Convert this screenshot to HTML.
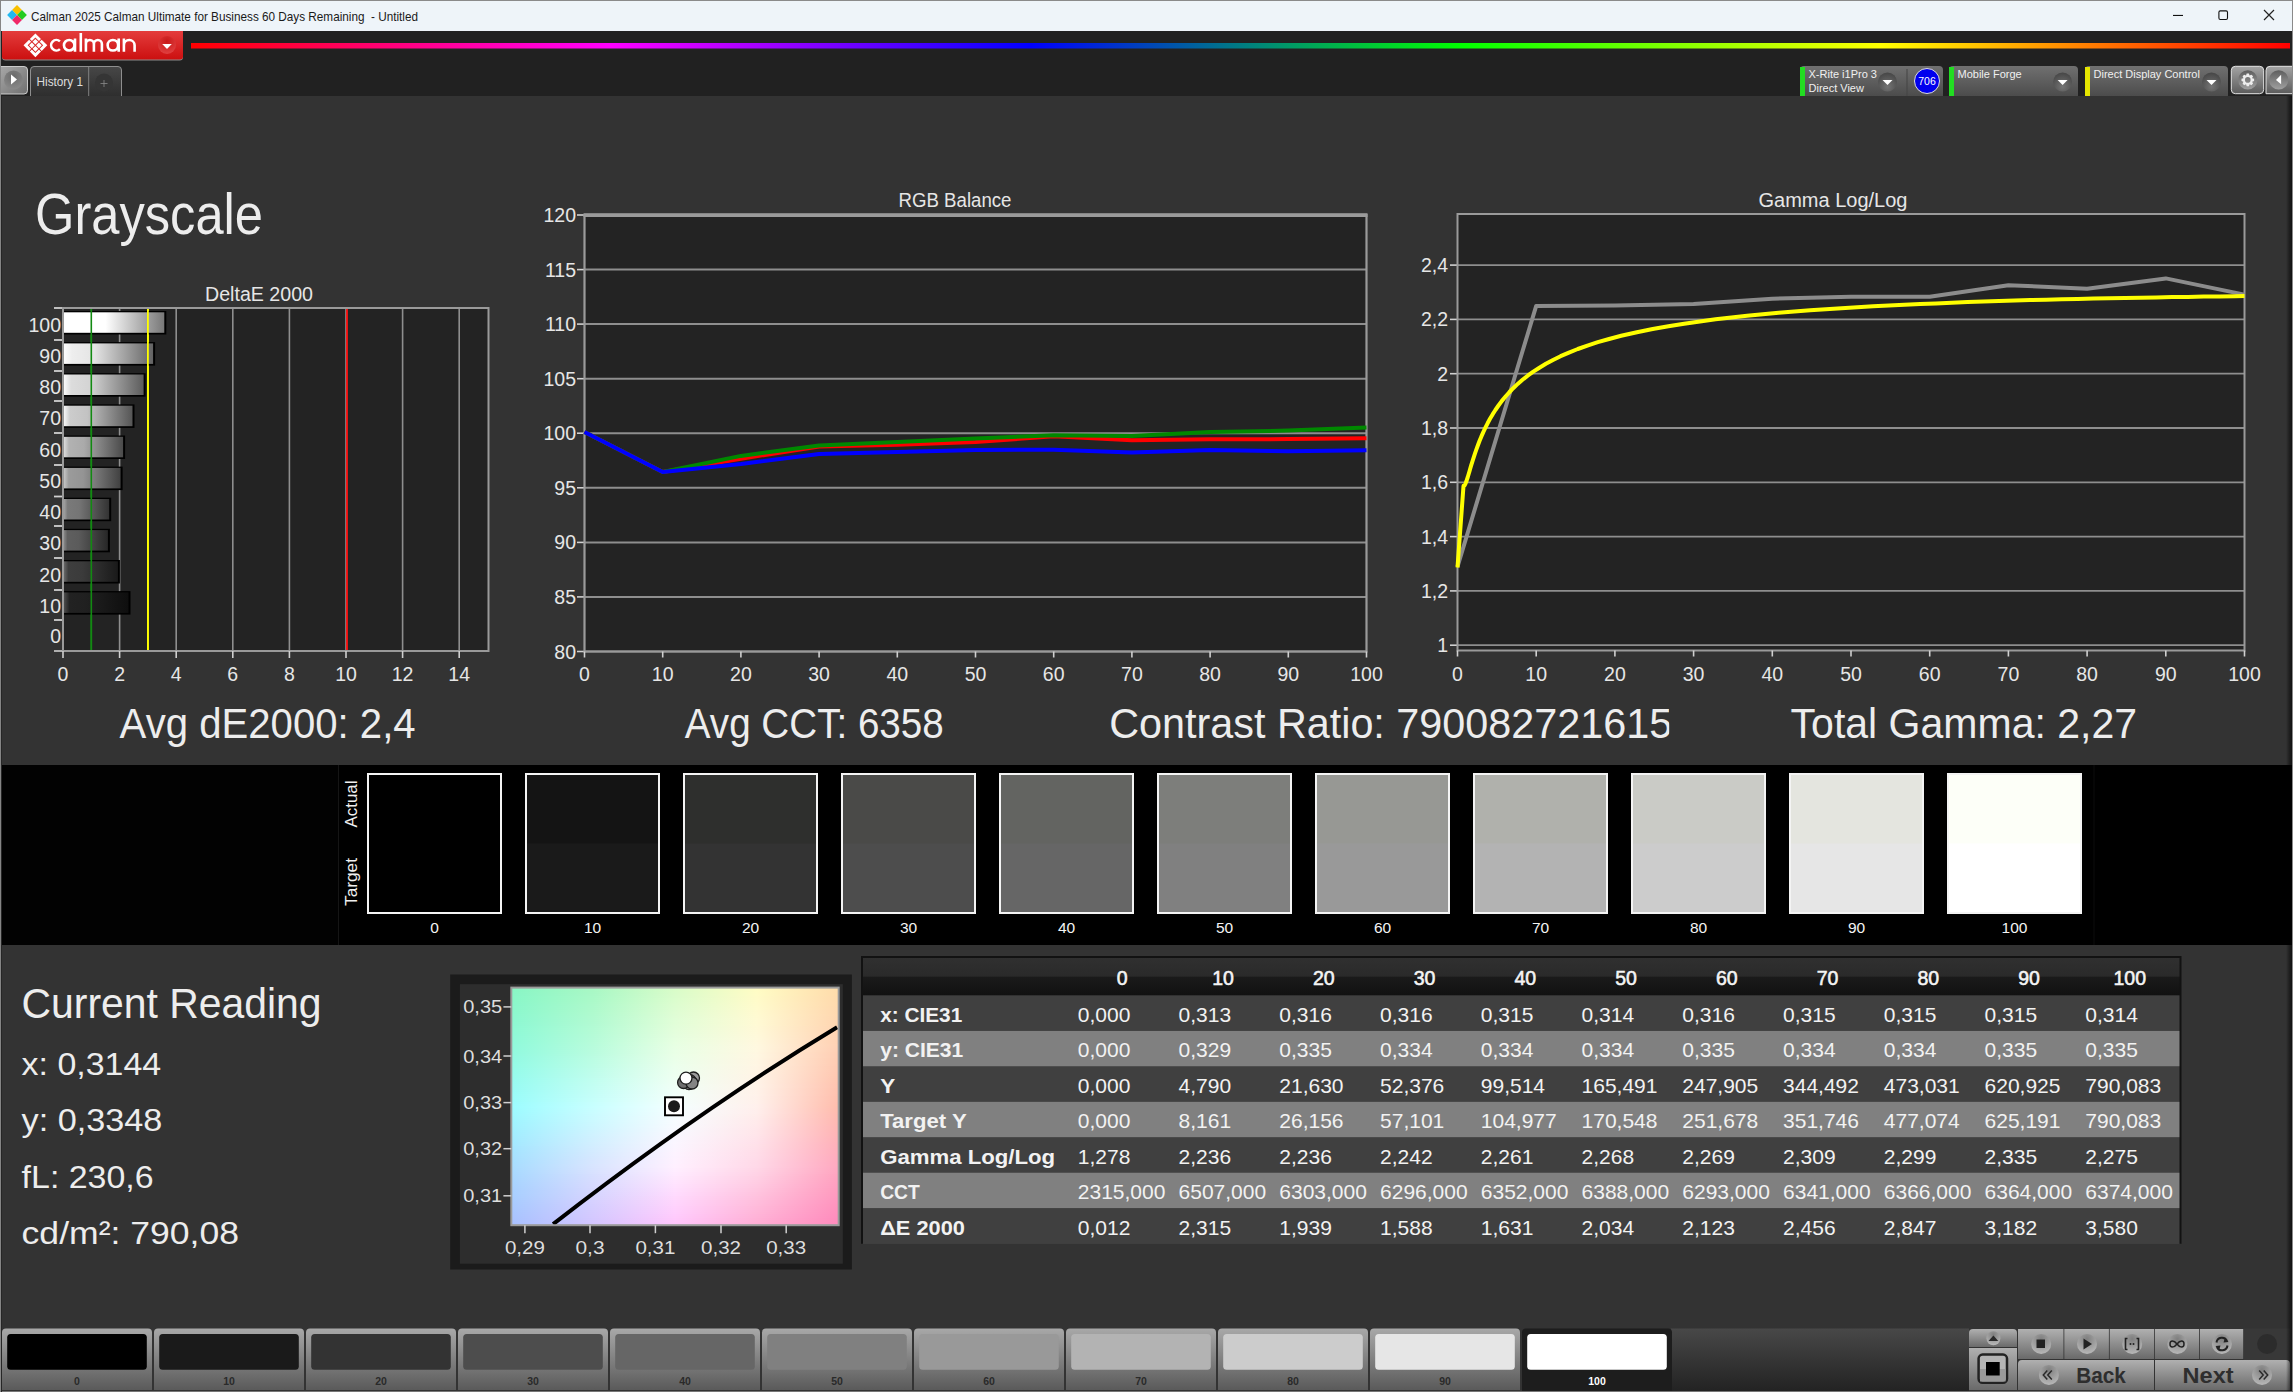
<!DOCTYPE html><html><head><meta charset="utf-8"><style>html,body{margin:0;padding:0;background:#333;overflow:hidden}svg{display:block}text{font-family:"Liberation Sans",sans-serif}</style></head><body>
<svg width="2293" height="1392" viewBox="0 0 2293 1392">
<defs>
<linearGradient id="rainbow" gradientUnits="userSpaceOnUse" x1="191" y1="0" x2="2290" y2="0"><stop offset="0" stop-color="#ff0000"/><stop offset="0.2" stop-color="#ff00ff"/><stop offset="0.4" stop-color="#0000ff"/><stop offset="0.605" stop-color="#00ff00"/><stop offset="0.805" stop-color="#ffff00"/><stop offset="1" stop-color="#ff0000"/></linearGradient>
<linearGradient id="redbox" x1="0" y1="0" x2="0" y2="1"><stop offset="0" stop-color="#e43c3c"/><stop offset="1" stop-color="#cc1010"/></linearGradient>
<radialGradient id="reddrop" cx="0.5" cy="0.3" r="0.7"><stop offset="0" stop-color="#c81818"/><stop offset="1" stop-color="#e04040"/></radialGradient>
<linearGradient id="tabg" x1="0" y1="0" x2="0" y2="1"><stop offset="0" stop-color="#474747"/><stop offset="1" stop-color="#2e2e2e"/></linearGradient>
<radialGradient id="dropc" cx="0.5" cy="0.75" r="0.75"><stop offset="0" stop-color="#7a7a7a"/><stop offset="1" stop-color="#404040"/></radialGradient>
<linearGradient id="widg" x1="0" y1="0" x2="0" y2="1"><stop offset="0" stop-color="#707070"/><stop offset="1" stop-color="#4c4c4c"/></linearGradient>
<linearGradient id="btng" x1="0" y1="0" x2="0" y2="1"><stop offset="0" stop-color="#a8a8a8"/><stop offset="1" stop-color="#5a5a5a"/></linearGradient>
<linearGradient id="hdrg" x1="0" y1="0" x2="0" y2="1"><stop offset="0" stop-color="#303030"/><stop offset="0.5" stop-color="#2a2a2a"/><stop offset="0.52" stop-color="#1a1a1a"/><stop offset="1" stop-color="#111"/></linearGradient>
</defs>
<rect x="0" y="0" width="2293" height="1392" fill="#333333"/>
<rect x="0" y="0" width="2293" height="31" fill="#eef4f9"/>
<rect x="0" y="31" width="2293" height="65" fill="#212121"/>
<rect x="0.5" y="0.5" width="2292" height="1391" fill="none" stroke="#8a8a8a" stroke-width="1"/>
<g transform="translate(17,15) rotate(45)"><rect x="-7" y="-7" width="7" height="7" fill="#f8c000"/><rect x="0" y="-7" width="7" height="7" fill="#22cc22"/><rect x="-7" y="0" width="7" height="7" fill="#22b8f0"/><rect x="0" y="0" width="7" height="7" fill="#f02868"/></g>
<text x="31" y="20.5" font-size="13.5" fill="#1a1a1a" text-anchor="start" font-weight="normal" textLength="387" lengthAdjust="spacingAndGlyphs" style="white-space:pre">Calman 2025 Calman Ultimate for Business 60 Days Remaining  - Untitled</text>
<rect x="2173" y="14.9" width="10" height="1.1" fill="#111"/>
<rect x="2218.9" y="10.9" width="8.6" height="8.6" rx="1.4" fill="none" stroke="#111" stroke-width="1.1"/>
<path d="M2264 10 L2274 20 M2274 10 L2264 20" stroke="#222" stroke-width="1.2"/>
<path d="M2 31 H183 V57 Q183 60.5 179.5 60.5 H5.5 Q2 60.5 2 57 Z" fill="#8c8c8c"/>
<path d="M2 31 H183 V56.5 Q183 59.5 180 59.5 H5 Q2 59.5 2 56.5 Z" fill="url(#redbox)"/>
<g transform="translate(35.4,45.3) rotate(45)" fill="#fff"><path d="M-8.40 -8.40 L-0.50 -8.40 L-0.50 -5.50 L-5.50 -5.50 L-5.50 -0.50 L-8.40 -0.50 Z"/><path d="M-8.40 8.40 L-0.50 8.40 L-0.50 5.50 L-5.50 5.50 L-5.50 0.50 L-8.40 0.50 Z"/><path d="M8.40 -8.40 L0.50 -8.40 L0.50 -5.50 L5.50 -5.50 L5.50 -0.50 L8.40 -0.50 Z"/><path d="M8.40 8.40 L0.50 8.40 L0.50 5.50 L5.50 5.50 L5.50 0.50 L8.40 0.50 Z"/><rect x="-4.5" y="-4.5" width="4.0" height="4.0"/><rect x="-4.5" y="0.5" width="4.0" height="4.0"/><rect x="0.5" y="-4.5" width="4.0" height="4.0"/><rect x="0.5" y="0.5" width="4.0" height="4.0"/></g>
<path d="M59.92 41.35 A5.25 5.25 0 1 0 59.92 49.15 M74.45 45.25 A5.25 5.25 0 1 1 63.95 45.25 A5.25 5.25 0 1 1 74.45 45.25 M75.0 38.6 V51.8 M80.8 33.0 V51.8 M85.9 38.6 V51.8 M85.9 44 A4 4 0 0 1 93.9 44 V51.8 M93.9 44 A4 4 0 0 1 101.9 44 V51.8 M118.15 45.25 A5.25 5.25 0 1 1 107.65 45.25 A5.25 5.25 0 1 1 118.15 45.25 M118.7 38.6 V51.8 M123.9 38.6 V51.8 M123.9 45.35 A5.35 5.35 0 0 1 134.6 45.35 V51.8" fill="none" stroke="#fff" stroke-width="2.6"/>
<circle cx="167" cy="45" r="9" fill="url(#reddrop)"/>
<path d="M162.2 44 H171.8 L167 49 Z" fill="#fff"/>
<rect x="191" y="43" width="2099" height="5.5" fill="url(#rainbow)"/>
<linearGradient id="playg" x1="0" y1="0" x2="1" y2="1"><stop offset="0" stop-color="#a8a8a8"/><stop offset="1" stop-color="#707070"/></linearGradient>
<radialGradient id="playc" cx="0.5" cy="0.3" r="0.7"><stop offset="0" stop-color="#6a6a6a"/><stop offset="1" stop-color="#8a8a8a"/></radialGradient>
<path d="M0 66.5 H24 Q27.5 66.5 27.5 70 V90.5 Q27.5 94 24 94 H0 Z" fill="url(#playg)" stroke="#d8d8d8" stroke-width="0.9"/>
<circle cx="13.5" cy="80" r="9.5" fill="url(#playc)"/>
<path d="M11 74.5 L17 79.5 L11 84.5 Z" fill="#fff"/>
<path d="M30.5 96 V70 Q30.5 66.5 34 66.5 H118 Q121.5 66.5 121.5 70 V96 Z" fill="url(#tabg)"/>
<path d="M30.5 96 V70 Q30.5 66.5 34 66.5 H118 Q121.5 66.5 121.5 70 V96" fill="none" stroke="#9a9a9a" stroke-width="0.9"/>
<line x1="88.7" y1="66.5" x2="88.7" y2="96" stroke="#8a8a8a" stroke-width="0.9"/>
<text x="36.5" y="86" font-size="12.5" fill="#dddddd" text-anchor="start" font-weight="normal" textLength="46.5" lengthAdjust="spacingAndGlyphs" >History 1</text>
<circle cx="104" cy="82.5" r="9" fill="#353535"/>
<path d="M100.5 83.5 H107.5 M104 80 V87" stroke="#8a8a8a" stroke-width="0.8"/>
<path d="M1800 96 V70 Q1800 66 1804 66 H1939 Q1943 66 1943 70 V96 Z" fill="url(#widg)"/>
<rect x="1800" y="67" width="5" height="29" fill="#22dd22"/>
<text x="1808.5" y="78" font-size="11" fill="#f0f0f0" text-anchor="start" font-weight="normal" >X-Rite i1Pro 3</text>
<text x="1808.5" y="92" font-size="11" fill="#f0f0f0" text-anchor="start" font-weight="normal" >Direct View</text>
<circle cx="1887.5" cy="82" r="9.5" fill="url(#dropc)" opacity="0.85"/>
<path d="M1882.5 80 H1892.5 L1887.5 85 Z" fill="#fff"/>
<line x1="1907" y1="69" x2="1907" y2="96" stroke="#444" stroke-width="1"/>
<circle cx="1927" cy="81" r="12.5" fill="#0000ee" stroke="#ddd" stroke-width="1"/>
<text x="1927" y="85" font-size="10.5" fill="#fff" text-anchor="middle" font-weight="normal" >706</text>
<path d="M1949 96 V70 Q1949 66 1953 66 H2074 Q2078 66 2078 70 V96 Z" fill="url(#widg)"/>
<rect x="1949" y="67" width="5" height="29" fill="#22dd22"/>
<text x="1957.5" y="78" font-size="11" fill="#f0f0f0" text-anchor="start" font-weight="normal" >Mobile Forge</text>
<circle cx="2062.6" cy="82" r="9.5" fill="url(#dropc)" opacity="0.85"/>
<path d="M2057.6 80 H2067.6 L2062.6 85 Z" fill="#fff"/>
<path d="M2085 96 V70 Q2085 66 2089 66 H2224 Q2228 66 2228 70 V96 Z" fill="url(#widg)"/>
<rect x="2085" y="67" width="5" height="29" fill="#e6e600"/>
<text x="2093.5" y="78" font-size="11" fill="#f0f0f0" text-anchor="start" font-weight="normal" >Direct Display Control</text>
<circle cx="2211.5" cy="82" r="9.5" fill="url(#dropc)" opacity="0.85"/>
<path d="M2206.5 80 H2216.5 L2211.5 85 Z" fill="#fff"/>
<linearGradient id="gbtn" x1="0" y1="0" x2="0" y2="1"><stop offset="0" stop-color="#a4a4a4"/><stop offset="1" stop-color="#5c5c5c"/></linearGradient>
<linearGradient id="gcirc" x1="0" y1="0" x2="0" y2="1"><stop offset="0" stop-color="#5e5e5e"/><stop offset="1" stop-color="#a0a0a0"/></linearGradient>
<rect x="2231.3" y="66.3" width="32.4" height="27.4" rx="4" fill="url(#gbtn)" stroke="#e4e4e4" stroke-width="1"/>
<circle cx="2247.8" cy="79.9" r="9.6" fill="url(#gcirc)"/>
<path d="M2246.04 75.54 L2246.69 73.60 L2248.91 73.60 L2249.56 75.54 L2249.64 75.57 L2251.47 74.66 L2253.04 76.23 L2252.13 78.06 L2252.16 78.14 L2254.10 78.79 L2254.10 81.01 L2252.16 81.66 L2252.13 81.74 L2253.04 83.57 L2251.47 85.14 L2249.64 84.23 L2249.56 84.26 L2248.91 86.20 L2246.69 86.20 L2246.04 84.26 L2245.96 84.23 L2244.13 85.14 L2242.56 83.57 L2243.47 81.74 L2243.44 81.66 L2241.50 81.01 L2241.50 78.79 L2243.44 78.14 L2243.47 78.06 L2242.56 76.23 L2244.13 74.66 L2245.96 75.57 Z M2250.6 79.9 A2.8 2.8 0 1 0 2245.0 79.9 A2.8 2.8 0 1 0 2250.6 79.9 Z" fill="#eeeeee" fill-rule="evenodd"/>
<path d="M2266 93.7 V70.3 Q2266 66.3 2270 66.3 H2293 V93.7 Z" fill="url(#gbtn)" stroke="#e4e4e4" stroke-width="1"/>
<circle cx="2278.7" cy="79.9" r="9.6" fill="url(#gcirc)"/>
<path d="M2281.1 74.8 L2276 80 L2281.1 84.2 Z" fill="#fff"/>
<text x="35" y="233.5" font-size="58" fill="#ededed" text-anchor="start" font-weight="normal" textLength="228" lengthAdjust="spacingAndGlyphs" >Grayscale</text>
<rect x="63" y="308" width="425.5" height="343" fill="#232323"/>
<text x="259" y="301" font-size="20" fill="#e6e6e6" text-anchor="middle" font-weight="normal" textLength="108" lengthAdjust="spacingAndGlyphs" >DeltaE 2000</text>
<line x1="119.6" y1="308" x2="119.6" y2="651" stroke="#8e8e8e" stroke-width="1.6"/>
<line x1="176.2" y1="308" x2="176.2" y2="651" stroke="#8e8e8e" stroke-width="1.6"/>
<line x1="232.8" y1="308" x2="232.8" y2="651" stroke="#8e8e8e" stroke-width="1.6"/>
<line x1="289.4" y1="308" x2="289.4" y2="651" stroke="#8e8e8e" stroke-width="1.6"/>
<line x1="346.0" y1="308" x2="346.0" y2="651" stroke="#8e8e8e" stroke-width="1.6"/>
<line x1="402.6" y1="308" x2="402.6" y2="651" stroke="#8e8e8e" stroke-width="1.6"/>
<line x1="459.2" y1="308" x2="459.2" y2="651" stroke="#8e8e8e" stroke-width="1.6"/>
<line x1="91.3" y1="308" x2="91.3" y2="651" stroke="#128a12" stroke-width="1.6"/>
<line x1="147.9" y1="308" x2="147.9" y2="651" stroke="#ffff00" stroke-width="1.8"/>
<line x1="347.0" y1="308" x2="347.0" y2="651" stroke="#ff1010" stroke-width="1.8"/>
<line x1="54" y1="308.0" x2="63" y2="308.0" stroke="#d0d0d0" stroke-width="1.8"/>
<text x="61" y="331.5" font-size="19.5" fill="#e6e6e6" text-anchor="end" font-weight="normal" >100</text>
<linearGradient id="bar100" gradientUnits="userSpaceOnUse" x1="63" y1="0" x2="164.3" y2="0"><stop offset="0" stop-color="rgb(255,255,255)"/><stop offset="0.42" stop-color="rgb(255,255,255)"/><stop offset="1" stop-color="rgb(120,120,120)"/></linearGradient>
<rect x="63" y="311.0" width="103.3" height="23.5" fill="#000"/>
<rect x="63" y="312.3" width="101.3" height="20.5" fill="url(#bar100)"/>
<line x1="54" y1="340.0" x2="63" y2="340.0" stroke="#d0d0d0" stroke-width="1.8"/>
<text x="61" y="363.0" font-size="19.5" fill="#e6e6e6" text-anchor="end" font-weight="normal" >90</text>
<linearGradient id="bar90" gradientUnits="userSpaceOnUse" x1="63" y1="0" x2="153.1" y2="0"><stop offset="0" stop-color="rgb(255,255,255)"/><stop offset="0.1" stop-color="rgb(238,238,238)"/><stop offset="0.35" stop-color="rgb(228,228,228)"/><stop offset="1" stop-color="rgb(99,99,99)"/></linearGradient>
<rect x="63" y="342.1" width="92.1" height="23.5" fill="#000"/>
<rect x="63" y="343.4" width="90.1" height="20.5" fill="url(#bar90)"/>
<line x1="54" y1="371.0" x2="63" y2="371.0" stroke="#d0d0d0" stroke-width="1.8"/>
<text x="61" y="393.5" font-size="19.5" fill="#e6e6e6" text-anchor="end" font-weight="normal" >80</text>
<linearGradient id="bar80" gradientUnits="userSpaceOnUse" x1="63" y1="0" x2="143.6" y2="0"><stop offset="0" stop-color="rgb(255,255,255)"/><stop offset="0.1" stop-color="rgb(220,220,220)"/><stop offset="0.35" stop-color="rgb(211,211,211)"/><stop offset="1" stop-color="rgb(92,92,92)"/></linearGradient>
<rect x="63" y="373.2" width="82.6" height="23.5" fill="#000"/>
<rect x="63" y="374.5" width="80.6" height="20.5" fill="url(#bar80)"/>
<line x1="54" y1="401.0" x2="63" y2="401.0" stroke="#d0d0d0" stroke-width="1.8"/>
<text x="61" y="424.5" font-size="19.5" fill="#e6e6e6" text-anchor="end" font-weight="normal" >70</text>
<linearGradient id="bar70" gradientUnits="userSpaceOnUse" x1="63" y1="0" x2="132.5" y2="0"><stop offset="0" stop-color="rgb(254,254,254)"/><stop offset="0.1" stop-color="rgb(204,204,204)"/><stop offset="0.35" stop-color="rgb(195,195,195)"/><stop offset="1" stop-color="rgb(85,85,85)"/></linearGradient>
<rect x="63" y="404.4" width="71.5" height="23.5" fill="#000"/>
<rect x="63" y="405.7" width="69.5" height="20.5" fill="url(#bar70)"/>
<line x1="54" y1="433.0" x2="63" y2="433.0" stroke="#d0d0d0" stroke-width="1.8"/>
<text x="61" y="456.5" font-size="19.5" fill="#e6e6e6" text-anchor="end" font-weight="normal" >60</text>
<linearGradient id="bar60" gradientUnits="userSpaceOnUse" x1="63" y1="0" x2="123.1" y2="0"><stop offset="0" stop-color="rgb(228,228,228)"/><stop offset="0.1" stop-color="rgb(178,178,178)"/><stop offset="0.35" stop-color="rgb(170,170,170)"/><stop offset="1" stop-color="rgb(74,74,74)"/></linearGradient>
<rect x="63" y="435.5" width="62.1" height="23.5" fill="#000"/>
<rect x="63" y="436.8" width="60.1" height="20.5" fill="url(#bar60)"/>
<line x1="54" y1="465.0" x2="63" y2="465.0" stroke="#d0d0d0" stroke-width="1.8"/>
<text x="61" y="488.25" font-size="19.5" fill="#e6e6e6" text-anchor="end" font-weight="normal" >50</text>
<linearGradient id="bar50" gradientUnits="userSpaceOnUse" x1="63" y1="0" x2="120.6" y2="0"><stop offset="0" stop-color="rgb(205,205,205)"/><stop offset="0.1" stop-color="rgb(155,155,155)"/><stop offset="0.35" stop-color="rgb(148,148,148)"/><stop offset="1" stop-color="rgb(65,65,65)"/></linearGradient>
<rect x="63" y="466.6" width="59.6" height="23.5" fill="#000"/>
<rect x="63" y="467.9" width="57.6" height="20.5" fill="url(#bar50)"/>
<line x1="54" y1="496.5" x2="63" y2="496.5" stroke="#d0d0d0" stroke-width="1.8"/>
<text x="61" y="518.75" font-size="19.5" fill="#e6e6e6" text-anchor="end" font-weight="normal" >40</text>
<linearGradient id="bar40" gradientUnits="userSpaceOnUse" x1="63" y1="0" x2="109.2" y2="0"><stop offset="0" stop-color="rgb(172,172,172)"/><stop offset="0.1" stop-color="rgb(122,122,122)"/><stop offset="0.35" stop-color="rgb(117,117,117)"/><stop offset="1" stop-color="rgb(51,51,51)"/></linearGradient>
<rect x="63" y="497.7" width="48.2" height="23.5" fill="#000"/>
<rect x="63" y="499.0" width="46.2" height="20.5" fill="url(#bar40)"/>
<line x1="54" y1="526.0" x2="63" y2="526.0" stroke="#d0d0d0" stroke-width="1.8"/>
<text x="61" y="549.5" font-size="19.5" fill="#e6e6e6" text-anchor="end" font-weight="normal" >30</text>
<linearGradient id="bar30" gradientUnits="userSpaceOnUse" x1="63" y1="0" x2="107.9" y2="0"><stop offset="0" stop-color="rgb(145,145,145)"/><stop offset="0.1" stop-color="rgb(95,95,95)"/><stop offset="0.35" stop-color="rgb(91,91,91)"/><stop offset="1" stop-color="rgb(39,39,39)"/></linearGradient>
<rect x="63" y="528.8" width="46.9" height="23.5" fill="#000"/>
<rect x="63" y="530.1" width="44.9" height="20.5" fill="url(#bar30)"/>
<line x1="54" y1="558.0" x2="63" y2="558.0" stroke="#d0d0d0" stroke-width="1.8"/>
<text x="61" y="581.5" font-size="19.5" fill="#e6e6e6" text-anchor="end" font-weight="normal" >20</text>
<linearGradient id="bar20" gradientUnits="userSpaceOnUse" x1="63" y1="0" x2="117.9" y2="0"><stop offset="0" stop-color="rgb(112,112,112)"/><stop offset="0.1" stop-color="rgb(62,62,62)"/><stop offset="0.35" stop-color="rgb(59,59,59)"/><stop offset="1" stop-color="rgb(26,26,26)"/></linearGradient>
<rect x="63" y="560.0" width="56.9" height="23.5" fill="#000"/>
<rect x="63" y="561.3" width="54.9" height="20.5" fill="url(#bar20)"/>
<line x1="54" y1="590.0" x2="63" y2="590.0" stroke="#d0d0d0" stroke-width="1.8"/>
<text x="61" y="612.5" font-size="19.5" fill="#e6e6e6" text-anchor="end" font-weight="normal" >10</text>
<linearGradient id="bar10" gradientUnits="userSpaceOnUse" x1="63" y1="0" x2="128.5" y2="0"><stop offset="0" stop-color="rgb(84,84,84)"/><stop offset="0.1" stop-color="rgb(34,34,34)"/><stop offset="0.35" stop-color="rgb(32,32,32)"/><stop offset="1" stop-color="rgb(14,14,14)"/></linearGradient>
<rect x="63" y="591.1" width="67.5" height="23.5" fill="#000"/>
<rect x="63" y="592.4" width="65.5" height="20.5" fill="url(#bar10)"/>
<line x1="54" y1="620.0" x2="63" y2="620.0" stroke="#d0d0d0" stroke-width="1.8"/>
<text x="61" y="643.0" font-size="19.5" fill="#e6e6e6" text-anchor="end" font-weight="normal" >0</text>
<line x1="54" y1="651" x2="63" y2="651" stroke="#d0d0d0" stroke-width="1.6"/>
<line x1="91.3" y1="308" x2="91.3" y2="651" stroke="#128a12" stroke-width="1.6"/>
<line x1="147.9" y1="308" x2="147.9" y2="651" stroke="#ffff00" stroke-width="1.8"/>
<path d="M63 651 V308 H488.5 V651 Z" fill="none" stroke="#9a9a9a" stroke-width="2"/>
<line x1="63.0" y1="651" x2="63.0" y2="658" stroke="#d0d0d0" stroke-width="1.6"/>
<text x="63.0" y="681" font-size="19.5" fill="#e6e6e6" text-anchor="middle" font-weight="normal" >0</text>
<line x1="119.6" y1="651" x2="119.6" y2="658" stroke="#d0d0d0" stroke-width="1.6"/>
<text x="119.6" y="681" font-size="19.5" fill="#e6e6e6" text-anchor="middle" font-weight="normal" >2</text>
<line x1="176.2" y1="651" x2="176.2" y2="658" stroke="#d0d0d0" stroke-width="1.6"/>
<text x="176.2" y="681" font-size="19.5" fill="#e6e6e6" text-anchor="middle" font-weight="normal" >4</text>
<line x1="232.8" y1="651" x2="232.8" y2="658" stroke="#d0d0d0" stroke-width="1.6"/>
<text x="232.8" y="681" font-size="19.5" fill="#e6e6e6" text-anchor="middle" font-weight="normal" >6</text>
<line x1="289.4" y1="651" x2="289.4" y2="658" stroke="#d0d0d0" stroke-width="1.6"/>
<text x="289.4" y="681" font-size="19.5" fill="#e6e6e6" text-anchor="middle" font-weight="normal" >8</text>
<line x1="346.0" y1="651" x2="346.0" y2="658" stroke="#d0d0d0" stroke-width="1.6"/>
<text x="346.0" y="681" font-size="19.5" fill="#e6e6e6" text-anchor="middle" font-weight="normal" >10</text>
<line x1="402.6" y1="651" x2="402.6" y2="658" stroke="#d0d0d0" stroke-width="1.6"/>
<text x="402.6" y="681" font-size="19.5" fill="#e6e6e6" text-anchor="middle" font-weight="normal" >12</text>
<line x1="459.2" y1="651" x2="459.2" y2="658" stroke="#d0d0d0" stroke-width="1.6"/>
<text x="459.2" y="681" font-size="19.5" fill="#e6e6e6" text-anchor="middle" font-weight="normal" >14</text>
<rect x="584.5" y="215" width="782.0" height="436.5" fill="#232323"/>
<text x="955" y="206.9" font-size="19.5" fill="#e6e6e6" text-anchor="middle" font-weight="normal" textLength="113" lengthAdjust="spacingAndGlyphs" >RGB Balance</text>
<line x1="584.5" y1="651.5" x2="1366.5" y2="651.5" stroke="#8e8e8e" stroke-width="2"/>
<line x1="577" y1="651.5" x2="584.5" y2="651.5" stroke="#d0d0d0" stroke-width="1.6"/>
<text x="576" y="658.5" font-size="19.5" fill="#e6e6e6" text-anchor="end" font-weight="normal" >80</text>
<line x1="584.5" y1="596.9" x2="1366.5" y2="596.9" stroke="#8e8e8e" stroke-width="2"/>
<line x1="577" y1="596.9" x2="584.5" y2="596.9" stroke="#d0d0d0" stroke-width="1.6"/>
<text x="576" y="603.9375" font-size="19.5" fill="#e6e6e6" text-anchor="end" font-weight="normal" >85</text>
<line x1="584.5" y1="542.4" x2="1366.5" y2="542.4" stroke="#8e8e8e" stroke-width="2"/>
<line x1="577" y1="542.4" x2="584.5" y2="542.4" stroke="#d0d0d0" stroke-width="1.6"/>
<text x="576" y="549.375" font-size="19.5" fill="#e6e6e6" text-anchor="end" font-weight="normal" >90</text>
<line x1="584.5" y1="487.8" x2="1366.5" y2="487.8" stroke="#8e8e8e" stroke-width="2"/>
<line x1="577" y1="487.8" x2="584.5" y2="487.8" stroke="#d0d0d0" stroke-width="1.6"/>
<text x="576" y="494.8125" font-size="19.5" fill="#e6e6e6" text-anchor="end" font-weight="normal" >95</text>
<line x1="584.5" y1="433.2" x2="1366.5" y2="433.2" stroke="#8e8e8e" stroke-width="2"/>
<line x1="577" y1="433.2" x2="584.5" y2="433.2" stroke="#d0d0d0" stroke-width="1.6"/>
<text x="576" y="440.25" font-size="19.5" fill="#e6e6e6" text-anchor="end" font-weight="normal" >100</text>
<line x1="584.5" y1="378.7" x2="1366.5" y2="378.7" stroke="#8e8e8e" stroke-width="2"/>
<line x1="577" y1="378.7" x2="584.5" y2="378.7" stroke="#d0d0d0" stroke-width="1.6"/>
<text x="576" y="385.6875" font-size="19.5" fill="#e6e6e6" text-anchor="end" font-weight="normal" >105</text>
<line x1="584.5" y1="324.1" x2="1366.5" y2="324.1" stroke="#8e8e8e" stroke-width="2"/>
<line x1="577" y1="324.1" x2="584.5" y2="324.1" stroke="#d0d0d0" stroke-width="1.6"/>
<text x="576" y="331.125" font-size="19.5" fill="#e6e6e6" text-anchor="end" font-weight="normal" >110</text>
<line x1="584.5" y1="269.6" x2="1366.5" y2="269.6" stroke="#8e8e8e" stroke-width="2"/>
<line x1="577" y1="269.6" x2="584.5" y2="269.6" stroke="#d0d0d0" stroke-width="1.6"/>
<text x="576" y="276.5625" font-size="19.5" fill="#e6e6e6" text-anchor="end" font-weight="normal" >115</text>
<line x1="584.5" y1="215.0" x2="1366.5" y2="215.0" stroke="#8e8e8e" stroke-width="2"/>
<line x1="577" y1="215.0" x2="584.5" y2="215.0" stroke="#d0d0d0" stroke-width="1.6"/>
<text x="576" y="222.0" font-size="19.5" fill="#e6e6e6" text-anchor="end" font-weight="normal" >120</text>
<path d="M584.5 651.5 V215 H1366.5 V651.5 Z" fill="none" stroke="#9a9a9a" stroke-width="2.2"/>
<rect x="583.5" y="213.2" width="784.0" height="3.8" fill="#9a9a9a"/>
<line x1="584.5" y1="651.5" x2="584.5" y2="657.5" stroke="#d0d0d0" stroke-width="1.6"/>
<text x="584.5" y="681" font-size="19.5" fill="#e6e6e6" text-anchor="middle" font-weight="normal" >0</text>
<line x1="662.7" y1="651.5" x2="662.7" y2="657.5" stroke="#d0d0d0" stroke-width="1.6"/>
<text x="662.7" y="681" font-size="19.5" fill="#e6e6e6" text-anchor="middle" font-weight="normal" >10</text>
<line x1="740.9" y1="651.5" x2="740.9" y2="657.5" stroke="#d0d0d0" stroke-width="1.6"/>
<text x="740.9" y="681" font-size="19.5" fill="#e6e6e6" text-anchor="middle" font-weight="normal" >20</text>
<line x1="819.1" y1="651.5" x2="819.1" y2="657.5" stroke="#d0d0d0" stroke-width="1.6"/>
<text x="819.1" y="681" font-size="19.5" fill="#e6e6e6" text-anchor="middle" font-weight="normal" >30</text>
<line x1="897.3" y1="651.5" x2="897.3" y2="657.5" stroke="#d0d0d0" stroke-width="1.6"/>
<text x="897.3" y="681" font-size="19.5" fill="#e6e6e6" text-anchor="middle" font-weight="normal" >40</text>
<line x1="975.5" y1="651.5" x2="975.5" y2="657.5" stroke="#d0d0d0" stroke-width="1.6"/>
<text x="975.5" y="681" font-size="19.5" fill="#e6e6e6" text-anchor="middle" font-weight="normal" >50</text>
<line x1="1053.7" y1="651.5" x2="1053.7" y2="657.5" stroke="#d0d0d0" stroke-width="1.6"/>
<text x="1053.7" y="681" font-size="19.5" fill="#e6e6e6" text-anchor="middle" font-weight="normal" >60</text>
<line x1="1131.9" y1="651.5" x2="1131.9" y2="657.5" stroke="#d0d0d0" stroke-width="1.6"/>
<text x="1131.9" y="681" font-size="19.5" fill="#e6e6e6" text-anchor="middle" font-weight="normal" >70</text>
<line x1="1210.1" y1="651.5" x2="1210.1" y2="657.5" stroke="#d0d0d0" stroke-width="1.6"/>
<text x="1210.1" y="681" font-size="19.5" fill="#e6e6e6" text-anchor="middle" font-weight="normal" >80</text>
<line x1="1288.3" y1="651.5" x2="1288.3" y2="657.5" stroke="#d0d0d0" stroke-width="1.6"/>
<text x="1288.3" y="681" font-size="19.5" fill="#e6e6e6" text-anchor="middle" font-weight="normal" >90</text>
<line x1="1366.5" y1="651.5" x2="1366.5" y2="657.5" stroke="#d0d0d0" stroke-width="1.6"/>
<text x="1366.5" y="681" font-size="19.5" fill="#e6e6e6" text-anchor="middle" font-weight="normal" >100</text>
<polyline points="584.5,432 662.7,472 740.9,458.7 819.1,446.5 897.3,444.7 975.5,442 1053.7,436.3 1131.9,440.2 1210.1,439.3 1288.3,439.1 1366.5,438.2" fill="none" stroke="#ff0000" stroke-width="4" stroke-linejoin="round"/>
<polyline points="584.5,432 662.7,472 740.9,455.9 819.1,445.5 897.3,441.9 975.5,438.5 1053.7,435.2 1131.9,435.9 1210.1,432 1288.3,430.6 1366.5,427.6" fill="none" stroke="#008800" stroke-width="4" stroke-linejoin="round"/>
<polyline points="584.5,432 662.7,472 740.9,464 819.1,454 897.3,452 975.5,450 1053.7,449.7 1131.9,452.4 1210.1,450.1 1288.3,451.3 1366.5,450.3" fill="none" stroke="#0000ff" stroke-width="4" stroke-linejoin="round"/>
<rect x="1457.5" y="214" width="787.0" height="436.5" fill="#232323"/>
<text x="1833" y="206.9" font-size="19.5" fill="#e6e6e6" text-anchor="middle" font-weight="normal" textLength="149" lengthAdjust="spacingAndGlyphs" >Gamma Log/Log</text>
<line x1="1457.5" y1="645.2" x2="2244.5" y2="645.2" stroke="#8e8e8e" stroke-width="1.8"/>
<line x1="1450" y1="645.2" x2="1457.5" y2="645.2" stroke="#d0d0d0" stroke-width="1.6"/>
<text x="1448" y="652.2" font-size="19.5" fill="#e6e6e6" text-anchor="end" font-weight="normal" >1</text>
<line x1="1457.5" y1="590.9" x2="2244.5" y2="590.9" stroke="#8e8e8e" stroke-width="1.8"/>
<line x1="1450" y1="590.9" x2="1457.5" y2="590.9" stroke="#d0d0d0" stroke-width="1.6"/>
<text x="1448" y="597.9000000000001" font-size="19.5" fill="#e6e6e6" text-anchor="end" font-weight="normal" >1,2</text>
<line x1="1457.5" y1="536.6" x2="2244.5" y2="536.6" stroke="#8e8e8e" stroke-width="1.8"/>
<line x1="1450" y1="536.6" x2="1457.5" y2="536.6" stroke="#d0d0d0" stroke-width="1.6"/>
<text x="1448" y="543.6" font-size="19.5" fill="#e6e6e6" text-anchor="end" font-weight="normal" >1,4</text>
<line x1="1457.5" y1="482.3" x2="2244.5" y2="482.3" stroke="#8e8e8e" stroke-width="1.8"/>
<line x1="1450" y1="482.3" x2="1457.5" y2="482.3" stroke="#d0d0d0" stroke-width="1.6"/>
<text x="1448" y="489.3" font-size="19.5" fill="#e6e6e6" text-anchor="end" font-weight="normal" >1,6</text>
<line x1="1457.5" y1="428.0" x2="2244.5" y2="428.0" stroke="#8e8e8e" stroke-width="1.8"/>
<line x1="1450" y1="428.0" x2="1457.5" y2="428.0" stroke="#d0d0d0" stroke-width="1.6"/>
<text x="1448" y="435.0" font-size="19.5" fill="#e6e6e6" text-anchor="end" font-weight="normal" >1,8</text>
<line x1="1457.5" y1="373.7" x2="2244.5" y2="373.7" stroke="#8e8e8e" stroke-width="1.8"/>
<line x1="1450" y1="373.7" x2="1457.5" y2="373.7" stroke="#d0d0d0" stroke-width="1.6"/>
<text x="1448" y="380.70000000000005" font-size="19.5" fill="#e6e6e6" text-anchor="end" font-weight="normal" >2</text>
<line x1="1457.5" y1="319.4" x2="2244.5" y2="319.4" stroke="#8e8e8e" stroke-width="1.8"/>
<line x1="1450" y1="319.4" x2="1457.5" y2="319.4" stroke="#d0d0d0" stroke-width="1.6"/>
<text x="1448" y="326.4" font-size="19.5" fill="#e6e6e6" text-anchor="end" font-weight="normal" >2,2</text>
<line x1="1457.5" y1="265.1" x2="2244.5" y2="265.1" stroke="#8e8e8e" stroke-width="1.8"/>
<line x1="1450" y1="265.1" x2="1457.5" y2="265.1" stroke="#d0d0d0" stroke-width="1.6"/>
<text x="1448" y="272.09999999999997" font-size="19.5" fill="#e6e6e6" text-anchor="end" font-weight="normal" >2,4</text>
<path d="M1457.5 650.5 V214 H2244.5 V650.5 Z" fill="none" stroke="#9a9a9a" stroke-width="2"/>
<line x1="1457.5" y1="650.5" x2="1457.5" y2="656.5" stroke="#d0d0d0" stroke-width="1.6"/>
<text x="1457.5" y="681" font-size="19.5" fill="#e6e6e6" text-anchor="middle" font-weight="normal" >0</text>
<line x1="1536.2" y1="650.5" x2="1536.2" y2="656.5" stroke="#d0d0d0" stroke-width="1.6"/>
<text x="1536.2" y="681" font-size="19.5" fill="#e6e6e6" text-anchor="middle" font-weight="normal" >10</text>
<line x1="1614.9" y1="650.5" x2="1614.9" y2="656.5" stroke="#d0d0d0" stroke-width="1.6"/>
<text x="1614.9" y="681" font-size="19.5" fill="#e6e6e6" text-anchor="middle" font-weight="normal" >20</text>
<line x1="1693.6" y1="650.5" x2="1693.6" y2="656.5" stroke="#d0d0d0" stroke-width="1.6"/>
<text x="1693.6" y="681" font-size="19.5" fill="#e6e6e6" text-anchor="middle" font-weight="normal" >30</text>
<line x1="1772.3" y1="650.5" x2="1772.3" y2="656.5" stroke="#d0d0d0" stroke-width="1.6"/>
<text x="1772.3" y="681" font-size="19.5" fill="#e6e6e6" text-anchor="middle" font-weight="normal" >40</text>
<line x1="1851.0" y1="650.5" x2="1851.0" y2="656.5" stroke="#d0d0d0" stroke-width="1.6"/>
<text x="1851.0" y="681" font-size="19.5" fill="#e6e6e6" text-anchor="middle" font-weight="normal" >50</text>
<line x1="1929.7" y1="650.5" x2="1929.7" y2="656.5" stroke="#d0d0d0" stroke-width="1.6"/>
<text x="1929.7" y="681" font-size="19.5" fill="#e6e6e6" text-anchor="middle" font-weight="normal" >60</text>
<line x1="2008.4" y1="650.5" x2="2008.4" y2="656.5" stroke="#d0d0d0" stroke-width="1.6"/>
<text x="2008.4" y="681" font-size="19.5" fill="#e6e6e6" text-anchor="middle" font-weight="normal" >70</text>
<line x1="2087.1" y1="650.5" x2="2087.1" y2="656.5" stroke="#d0d0d0" stroke-width="1.6"/>
<text x="2087.1" y="681" font-size="19.5" fill="#e6e6e6" text-anchor="middle" font-weight="normal" >80</text>
<line x1="2165.8" y1="650.5" x2="2165.8" y2="656.5" stroke="#d0d0d0" stroke-width="1.6"/>
<text x="2165.8" y="681" font-size="19.5" fill="#e6e6e6" text-anchor="middle" font-weight="normal" >90</text>
<line x1="2244.5" y1="650.5" x2="2244.5" y2="656.5" stroke="#d0d0d0" stroke-width="1.6"/>
<text x="2244.5" y="681" font-size="19.5" fill="#e6e6e6" text-anchor="middle" font-weight="normal" >100</text>
<polyline points="1457.5,566.6 1536.2,305.9 1614.9,305.6 1693.6,304.1 1772.3,298.7 1851.0,296.8 1929.7,296.8 2008.4,285.2 2087.1,288.7 2165.8,278.4 2244.5,294.6" fill="none" stroke="#8c8c8c" stroke-width="4" stroke-linejoin="round"/>
<polyline points="1457.5,567.5 1463.5,485.8 1464.0,485.9 1464.5,485.5 1465.0,484.6 1465.6,483.3 1466.3,481.6 1467.0,479.4 1467.8,477.0 1468.6,474.3 1469.5,471.2 1470.4,468.0 1471.4,464.6 1472.6,460.9 1473.8,457.1 1475.1,453.2 1476.5,449.1 1478.0,445.0 1479.6,440.8 1481.4,436.4 1483.3,432.1 1485.4,427.7 1487.6,423.3 1490.0,418.8 1492.6,414.4 1495.4,410.0 1498.5,405.5 1501.7,401.1 1505.3,396.8 1509.1,392.5 1513.2,388.2 1517.7,383.9 1522.5,379.8 1527.7,375.7 1533.3,371.6 1539.4,367.7 1545.9,363.8 1553.0,360.0 1560.6,356.2 1568.9,352.6 1577.8,349.0 1587.4,345.6 1597.8,342.2 1609.1,339.0 1621.2,335.8 1636.9,332.2 1652.7,329.0 1668.4,326.2 1684.1,323.7 1699.9,321.4 1715.6,319.3 1731.4,317.5 1747.1,315.8 1762.8,314.2 1778.6,312.8 1794.3,311.5 1810.1,310.3 1825.8,309.2 1841.5,308.2 1857.3,307.2 1873.0,306.3 1888.8,305.5 1904.5,304.7 1920.2,304.0 1936.0,303.4 1951.7,302.7 1967.5,302.1 1983.2,301.6 1998.9,301.1 2014.7,300.6 2030.4,300.1 2046.2,299.7 2061.9,299.3 2077.6,298.9 2093.4,298.6 2109.1,298.3 2124.9,297.9 2140.6,297.7 2156.3,297.4 2172.1,297.1 2187.8,296.9 2203.6,296.6 2219.3,296.4 2235.0,296.2 2244.5,296.1" fill="none" stroke="#ffff00" stroke-width="4" stroke-linejoin="round"/>
<text x="119.6" y="738.3" font-size="42" fill="#ededed" text-anchor="start" font-weight="normal" textLength="296" lengthAdjust="spacingAndGlyphs" >Avg dE2000: 2,4</text>
<text x="684.8" y="738.3" font-size="42" fill="#ededed" text-anchor="start" font-weight="normal" textLength="259" lengthAdjust="spacingAndGlyphs" >Avg CCT: 6358</text>
<clipPath id="crclip"><rect x="1100" y="690" width="569.2" height="70"/></clipPath>
<text x="1109.2" y="738.3" font-size="42" fill="#ededed" text-anchor="start" font-weight="normal" textLength="563" lengthAdjust="spacingAndGlyphs" clip-path="url(#crclip)">Contrast Ratio: 790082721615</text>
<text x="1790.6" y="738.3" font-size="42" fill="#ededed" text-anchor="start" font-weight="normal" textLength="346.5" lengthAdjust="spacingAndGlyphs" >Total Gamma: 2,27</text>
<rect x="0" y="765" width="2293" height="180" fill="#000"/>
<rect x="1" y="765" width="337" height="180" fill="#020202"/>
<line x1="338.5" y1="765" x2="338.5" y2="945" stroke="#151515" stroke-width="1"/>
<line x1="2094" y1="765" x2="2094" y2="945" stroke="#0c0c0c" stroke-width="1"/>
<rect x="368" y="774" width="133" height="70" fill="rgb(0,0,0)"/>
<rect x="368" y="843.5" width="133" height="69.5" fill="rgb(0,0,0)"/>
<rect x="368" y="774" width="133" height="139" fill="none" stroke="#f4f4f4" stroke-width="2"/>
<text x="434.5" y="932.6" font-size="15.5" fill="#f4f4f4" text-anchor="middle" font-weight="normal" >0</text>
<rect x="526" y="774" width="133" height="70" fill="rgb(20,20,20)"/>
<rect x="526" y="843.5" width="133" height="69.5" fill="rgb(26,26,26)"/>
<rect x="526" y="774" width="133" height="139" fill="none" stroke="#f4f4f4" stroke-width="2"/>
<text x="592.5" y="932.6" font-size="15.5" fill="#f4f4f4" text-anchor="middle" font-weight="normal" >10</text>
<rect x="684" y="774" width="133" height="70" fill="rgb(46,47,45)"/>
<rect x="684" y="843.5" width="133" height="69.5" fill="rgb(51,51,51)"/>
<rect x="684" y="774" width="133" height="139" fill="none" stroke="#f4f4f4" stroke-width="2"/>
<text x="750.5" y="932.6" font-size="15.5" fill="#f4f4f4" text-anchor="middle" font-weight="normal" >20</text>
<rect x="842" y="774" width="133" height="70" fill="rgb(74,74,72)"/>
<rect x="842" y="843.5" width="133" height="69.5" fill="rgb(77,77,77)"/>
<rect x="842" y="774" width="133" height="139" fill="none" stroke="#f4f4f4" stroke-width="2"/>
<text x="908.5" y="932.6" font-size="15.5" fill="#f4f4f4" text-anchor="middle" font-weight="normal" >30</text>
<rect x="1000" y="774" width="133" height="70" fill="rgb(99,100,97)"/>
<rect x="1000" y="843.5" width="133" height="69.5" fill="rgb(102,102,102)"/>
<rect x="1000" y="774" width="133" height="139" fill="none" stroke="#f4f4f4" stroke-width="2"/>
<text x="1066.5" y="932.6" font-size="15.5" fill="#f4f4f4" text-anchor="middle" font-weight="normal" >40</text>
<rect x="1158" y="774" width="133" height="70" fill="rgb(125,126,123)"/>
<rect x="1158" y="843.5" width="133" height="69.5" fill="rgb(128,128,128)"/>
<rect x="1158" y="774" width="133" height="139" fill="none" stroke="#f4f4f4" stroke-width="2"/>
<text x="1224.5" y="932.6" font-size="15.5" fill="#f4f4f4" text-anchor="middle" font-weight="normal" >50</text>
<rect x="1316" y="774" width="133" height="70" fill="rgb(151,152,148)"/>
<rect x="1316" y="843.5" width="133" height="69.5" fill="rgb(153,153,153)"/>
<rect x="1316" y="774" width="133" height="139" fill="none" stroke="#f4f4f4" stroke-width="2"/>
<text x="1382.5" y="932.6" font-size="15.5" fill="#f4f4f4" text-anchor="middle" font-weight="normal" >60</text>
<rect x="1474" y="774" width="133" height="70" fill="rgb(176,177,172)"/>
<rect x="1474" y="843.5" width="133" height="69.5" fill="rgb(179,179,179)"/>
<rect x="1474" y="774" width="133" height="139" fill="none" stroke="#f4f4f4" stroke-width="2"/>
<text x="1540.5" y="932.6" font-size="15.5" fill="#f4f4f4" text-anchor="middle" font-weight="normal" >70</text>
<rect x="1632" y="774" width="133" height="70" fill="rgb(202,203,198)"/>
<rect x="1632" y="843.5" width="133" height="69.5" fill="rgb(204,204,204)"/>
<rect x="1632" y="774" width="133" height="139" fill="none" stroke="#f4f4f4" stroke-width="2"/>
<text x="1698.5" y="932.6" font-size="15.5" fill="#f4f4f4" text-anchor="middle" font-weight="normal" >80</text>
<rect x="1790" y="774" width="133" height="70" fill="rgb(228,229,223)"/>
<rect x="1790" y="843.5" width="133" height="69.5" fill="rgb(230,230,230)"/>
<rect x="1790" y="774" width="133" height="139" fill="none" stroke="#f4f4f4" stroke-width="2"/>
<text x="1856.5" y="932.6" font-size="15.5" fill="#f4f4f4" text-anchor="middle" font-weight="normal" >90</text>
<rect x="1948" y="774" width="133" height="70" fill="rgb(253,255,248)"/>
<rect x="1948" y="843.5" width="133" height="69.5" fill="rgb(255,255,255)"/>
<rect x="1948" y="774" width="133" height="139" fill="none" stroke="#f4f4f4" stroke-width="2"/>
<text x="2014.5" y="932.6" font-size="15.5" fill="#f4f4f4" text-anchor="middle" font-weight="normal" >100</text>
<text x="0" y="0" font-size="17" fill="#f0f0f0" text-anchor="middle" font-weight="normal" textLength="47" lengthAdjust="spacingAndGlyphs" transform="translate(357,804) rotate(-90)">Actual</text>
<text x="0" y="0" font-size="17" fill="#f0f0f0" text-anchor="middle" font-weight="normal" textLength="48" lengthAdjust="spacingAndGlyphs" transform="translate(357,882) rotate(-90)">Target</text>
<text x="21.6" y="1018.3" font-size="43" fill="#ededed" text-anchor="start" font-weight="normal" textLength="300" lengthAdjust="spacingAndGlyphs" >Current Reading</text>
<text x="21.6" y="1075.2" font-size="32" fill="#ededed" text-anchor="start" font-weight="normal" textLength="139.6" lengthAdjust="spacingAndGlyphs" >x: 0,3144</text>
<text x="21.6" y="1131.3" font-size="32" fill="#ededed" text-anchor="start" font-weight="normal" textLength="140.8" lengthAdjust="spacingAndGlyphs" >y: 0,3348</text>
<text x="21.6" y="1188.2" font-size="32" fill="#ededed" text-anchor="start" font-weight="normal" textLength="132" lengthAdjust="spacingAndGlyphs" >fL: 230,6</text>
<text x="21.6" y="1244" font-size="32" fill="#ededed" text-anchor="start" font-weight="normal" textLength="217.4" lengthAdjust="spacingAndGlyphs" >cd/m²: 790,08</text>
<rect x="450.2" y="974.5" width="401.7" height="295" fill="#1b1b1b"/>
<rect x="459.9" y="984.2" width="382.9" height="279.5" fill="#2d2d2d"/>
<g shape-rendering="crispEdges">
<linearGradient id="cie0" gradientUnits="userSpaceOnUse" x1="511.3" y1="0" x2="838.7" y2="0"><stop offset="0.0" stop-color="rgb(136,246,196)"/><stop offset="0.25" stop-color="rgb(168,248,196)"/><stop offset="0.5" stop-color="rgb(216,252,200)"/><stop offset="0.75" stop-color="rgb(255,252,196)"/><stop offset="1.0" stop-color="rgb(255,220,170)"/></linearGradient>
<rect x="511" y="988" width="328" height="2" fill="url(#cie0)"/>
<linearGradient id="cie1" gradientUnits="userSpaceOnUse" x1="511.3" y1="0" x2="838.7" y2="0"><stop offset="0.0" stop-color="rgb(136,246,197)"/><stop offset="0.25" stop-color="rgb(169,248,197)"/><stop offset="0.5" stop-color="rgb(217,252,201)"/><stop offset="0.75" stop-color="rgb(255,252,197)"/><stop offset="1.0" stop-color="rgb(255,219,171)"/></linearGradient>
<rect x="511" y="990" width="328" height="2" fill="url(#cie1)"/>
<linearGradient id="cie2" gradientUnits="userSpaceOnUse" x1="511.3" y1="0" x2="838.7" y2="0"><stop offset="0.0" stop-color="rgb(137,246,198)"/><stop offset="0.25" stop-color="rgb(169,248,198)"/><stop offset="0.5" stop-color="rgb(217,252,202)"/><stop offset="0.75" stop-color="rgb(255,252,198)"/><stop offset="1.0" stop-color="rgb(255,219,171)"/></linearGradient>
<rect x="511" y="992" width="328" height="2" fill="url(#cie2)"/>
<linearGradient id="cie3" gradientUnits="userSpaceOnUse" x1="511.3" y1="0" x2="838.7" y2="0"><stop offset="0.0" stop-color="rgb(137,246,199)"/><stop offset="0.25" stop-color="rgb(170,248,199)"/><stop offset="0.5" stop-color="rgb(218,252,203)"/><stop offset="0.75" stop-color="rgb(255,252,199)"/><stop offset="1.0" stop-color="rgb(255,219,171)"/></linearGradient>
<rect x="511" y="994" width="328" height="2" fill="url(#cie3)"/>
<linearGradient id="cie4" gradientUnits="userSpaceOnUse" x1="511.3" y1="0" x2="838.7" y2="0"><stop offset="0.0" stop-color="rgb(137,247,200)"/><stop offset="0.25" stop-color="rgb(170,249,200)"/><stop offset="0.5" stop-color="rgb(218,252,204)"/><stop offset="0.75" stop-color="rgb(255,251,200)"/><stop offset="1.0" stop-color="rgb(255,218,172)"/></linearGradient>
<rect x="511" y="996" width="328" height="2" fill="url(#cie4)"/>
<linearGradient id="cie5" gradientUnits="userSpaceOnUse" x1="511.3" y1="0" x2="838.7" y2="0"><stop offset="0.0" stop-color="rgb(137,247,200)"/><stop offset="0.25" stop-color="rgb(171,249,200)"/><stop offset="0.5" stop-color="rgb(219,253,205)"/><stop offset="0.75" stop-color="rgb(255,251,201)"/><stop offset="1.0" stop-color="rgb(255,218,172)"/></linearGradient>
<rect x="511" y="998" width="328" height="2" fill="url(#cie5)"/>
<linearGradient id="cie6" gradientUnits="userSpaceOnUse" x1="511.3" y1="0" x2="838.7" y2="0"><stop offset="0.0" stop-color="rgb(138,247,201)"/><stop offset="0.25" stop-color="rgb(171,249,201)"/><stop offset="0.5" stop-color="rgb(219,253,206)"/><stop offset="0.75" stop-color="rgb(255,251,202)"/><stop offset="1.0" stop-color="rgb(255,217,172)"/></linearGradient>
<rect x="511" y="1000" width="328" height="2" fill="url(#cie6)"/>
<linearGradient id="cie7" gradientUnits="userSpaceOnUse" x1="511.3" y1="0" x2="838.7" y2="0"><stop offset="0.0" stop-color="rgb(138,247,202)"/><stop offset="0.25" stop-color="rgb(172,249,202)"/><stop offset="0.5" stop-color="rgb(220,253,207)"/><stop offset="0.75" stop-color="rgb(255,251,203)"/><stop offset="1.0" stop-color="rgb(255,217,173)"/></linearGradient>
<rect x="511" y="1002" width="328" height="2" fill="url(#cie7)"/>
<linearGradient id="cie8" gradientUnits="userSpaceOnUse" x1="511.3" y1="0" x2="838.7" y2="0"><stop offset="0.0" stop-color="rgb(138,247,203)"/><stop offset="0.25" stop-color="rgb(173,249,203)"/><stop offset="0.5" stop-color="rgb(221,253,208)"/><stop offset="0.75" stop-color="rgb(255,251,204)"/><stop offset="1.0" stop-color="rgb(255,217,173)"/></linearGradient>
<rect x="511" y="1004" width="328" height="2" fill="url(#cie8)"/>
<linearGradient id="cie9" gradientUnits="userSpaceOnUse" x1="511.3" y1="0" x2="838.7" y2="0"><stop offset="0.0" stop-color="rgb(139,247,204)"/><stop offset="0.25" stop-color="rgb(173,249,204)"/><stop offset="0.5" stop-color="rgb(221,253,209)"/><stop offset="0.75" stop-color="rgb(255,251,205)"/><stop offset="1.0" stop-color="rgb(255,216,173)"/></linearGradient>
<rect x="511" y="1006" width="328" height="2" fill="url(#cie9)"/>
<linearGradient id="cie10" gradientUnits="userSpaceOnUse" x1="511.3" y1="0" x2="838.7" y2="0"><stop offset="0.0" stop-color="rgb(139,247,204)"/><stop offset="0.25" stop-color="rgb(174,249,204)"/><stop offset="0.5" stop-color="rgb(222,253,210)"/><stop offset="0.75" stop-color="rgb(255,251,206)"/><stop offset="1.0" stop-color="rgb(255,216,174)"/></linearGradient>
<rect x="511" y="1008" width="328" height="2" fill="url(#cie10)"/>
<linearGradient id="cie11" gradientUnits="userSpaceOnUse" x1="511.3" y1="0" x2="838.7" y2="0"><stop offset="0.0" stop-color="rgb(139,248,205)"/><stop offset="0.25" stop-color="rgb(174,250,205)"/><stop offset="0.5" stop-color="rgb(222,253,211)"/><stop offset="0.75" stop-color="rgb(255,250,207)"/><stop offset="1.0" stop-color="rgb(255,215,174)"/></linearGradient>
<rect x="511" y="1010" width="328" height="2" fill="url(#cie11)"/>
<linearGradient id="cie12" gradientUnits="userSpaceOnUse" x1="511.3" y1="0" x2="838.7" y2="0"><stop offset="0.0" stop-color="rgb(139,248,206)"/><stop offset="0.25" stop-color="rgb(175,250,206)"/><stop offset="0.5" stop-color="rgb(223,253,212)"/><stop offset="0.75" stop-color="rgb(255,250,208)"/><stop offset="1.0" stop-color="rgb(255,215,174)"/></linearGradient>
<rect x="511" y="1012" width="328" height="2" fill="url(#cie12)"/>
<linearGradient id="cie13" gradientUnits="userSpaceOnUse" x1="511.3" y1="0" x2="838.7" y2="0"><stop offset="0.0" stop-color="rgb(140,248,207)"/><stop offset="0.25" stop-color="rgb(175,250,207)"/><stop offset="0.5" stop-color="rgb(223,253,213)"/><stop offset="0.75" stop-color="rgb(255,250,209)"/><stop offset="1.0" stop-color="rgb(255,215,175)"/></linearGradient>
<rect x="511" y="1014" width="328" height="2" fill="url(#cie13)"/>
<linearGradient id="cie14" gradientUnits="userSpaceOnUse" x1="511.3" y1="0" x2="838.7" y2="0"><stop offset="0.0" stop-color="rgb(140,248,208)"/><stop offset="0.25" stop-color="rgb(176,250,208)"/><stop offset="0.5" stop-color="rgb(224,253,214)"/><stop offset="0.75" stop-color="rgb(255,250,210)"/><stop offset="1.0" stop-color="rgb(255,214,175)"/></linearGradient>
<rect x="511" y="1016" width="328" height="2" fill="url(#cie14)"/>
<linearGradient id="cie15" gradientUnits="userSpaceOnUse" x1="511.3" y1="0" x2="838.7" y2="0"><stop offset="0.0" stop-color="rgb(140,248,209)"/><stop offset="0.25" stop-color="rgb(176,250,209)"/><stop offset="0.5" stop-color="rgb(224,254,215)"/><stop offset="0.75" stop-color="rgb(255,250,211)"/><stop offset="1.0" stop-color="rgb(255,214,175)"/></linearGradient>
<rect x="511" y="1018" width="328" height="2" fill="url(#cie15)"/>
<linearGradient id="cie16" gradientUnits="userSpaceOnUse" x1="511.3" y1="0" x2="838.7" y2="0"><stop offset="0.0" stop-color="rgb(140,248,209)"/><stop offset="0.25" stop-color="rgb(177,250,209)"/><stop offset="0.5" stop-color="rgb(225,254,216)"/><stop offset="0.75" stop-color="rgb(255,250,212)"/><stop offset="1.0" stop-color="rgb(255,213,176)"/></linearGradient>
<rect x="511" y="1020" width="328" height="2" fill="url(#cie16)"/>
<linearGradient id="cie17" gradientUnits="userSpaceOnUse" x1="511.3" y1="0" x2="838.7" y2="0"><stop offset="0.0" stop-color="rgb(141,248,210)"/><stop offset="0.25" stop-color="rgb(177,250,210)"/><stop offset="0.5" stop-color="rgb(225,254,216)"/><stop offset="0.75" stop-color="rgb(255,250,212)"/><stop offset="1.0" stop-color="rgb(255,213,176)"/></linearGradient>
<rect x="511" y="1022" width="328" height="2" fill="url(#cie17)"/>
<linearGradient id="cie18" gradientUnits="userSpaceOnUse" x1="511.3" y1="0" x2="838.7" y2="0"><stop offset="0.0" stop-color="rgb(141,248,211)"/><stop offset="0.25" stop-color="rgb(178,250,211)"/><stop offset="0.5" stop-color="rgb(226,254,217)"/><stop offset="0.75" stop-color="rgb(255,250,213)"/><stop offset="1.0" stop-color="rgb(255,213,176)"/></linearGradient>
<rect x="511" y="1024" width="328" height="2" fill="url(#cie18)"/>
<linearGradient id="cie19" gradientUnits="userSpaceOnUse" x1="511.3" y1="0" x2="838.7" y2="0"><stop offset="0.0" stop-color="rgb(141,249,212)"/><stop offset="0.25" stop-color="rgb(178,251,212)"/><stop offset="0.5" stop-color="rgb(226,254,218)"/><stop offset="0.75" stop-color="rgb(255,249,214)"/><stop offset="1.0" stop-color="rgb(255,212,177)"/></linearGradient>
<rect x="511" y="1026" width="328" height="2" fill="url(#cie19)"/>
<linearGradient id="cie20" gradientUnits="userSpaceOnUse" x1="511.3" y1="0" x2="838.7" y2="0"><stop offset="0.0" stop-color="rgb(142,249,213)"/><stop offset="0.25" stop-color="rgb(179,251,213)"/><stop offset="0.5" stop-color="rgb(227,254,219)"/><stop offset="0.75" stop-color="rgb(255,249,215)"/><stop offset="1.0" stop-color="rgb(255,212,177)"/></linearGradient>
<rect x="511" y="1028" width="328" height="2" fill="url(#cie20)"/>
<linearGradient id="cie21" gradientUnits="userSpaceOnUse" x1="511.3" y1="0" x2="838.7" y2="0"><stop offset="0.0" stop-color="rgb(142,249,213)"/><stop offset="0.25" stop-color="rgb(180,251,213)"/><stop offset="0.5" stop-color="rgb(228,254,220)"/><stop offset="0.75" stop-color="rgb(255,249,216)"/><stop offset="1.0" stop-color="rgb(255,211,177)"/></linearGradient>
<rect x="511" y="1030" width="328" height="2" fill="url(#cie21)"/>
<linearGradient id="cie22" gradientUnits="userSpaceOnUse" x1="511.3" y1="0" x2="838.7" y2="0"><stop offset="0.0" stop-color="rgb(142,249,214)"/><stop offset="0.25" stop-color="rgb(180,251,214)"/><stop offset="0.5" stop-color="rgb(228,254,221)"/><stop offset="0.75" stop-color="rgb(255,249,217)"/><stop offset="1.0" stop-color="rgb(255,211,178)"/></linearGradient>
<rect x="511" y="1032" width="328" height="2" fill="url(#cie22)"/>
<linearGradient id="cie23" gradientUnits="userSpaceOnUse" x1="511.3" y1="0" x2="838.7" y2="0"><stop offset="0.0" stop-color="rgb(142,249,215)"/><stop offset="0.25" stop-color="rgb(181,251,215)"/><stop offset="0.5" stop-color="rgb(229,254,222)"/><stop offset="0.75" stop-color="rgb(255,249,218)"/><stop offset="1.0" stop-color="rgb(255,211,178)"/></linearGradient>
<rect x="511" y="1034" width="328" height="2" fill="url(#cie23)"/>
<linearGradient id="cie24" gradientUnits="userSpaceOnUse" x1="511.3" y1="0" x2="838.7" y2="0"><stop offset="0.0" stop-color="rgb(143,249,216)"/><stop offset="0.25" stop-color="rgb(181,251,216)"/><stop offset="0.5" stop-color="rgb(229,254,223)"/><stop offset="0.75" stop-color="rgb(255,249,219)"/><stop offset="1.0" stop-color="rgb(255,210,178)"/></linearGradient>
<rect x="511" y="1036" width="328" height="2" fill="url(#cie24)"/>
<linearGradient id="cie25" gradientUnits="userSpaceOnUse" x1="511.3" y1="0" x2="838.7" y2="0"><stop offset="0.0" stop-color="rgb(143,249,217)"/><stop offset="0.25" stop-color="rgb(182,251,217)"/><stop offset="0.5" stop-color="rgb(230,255,224)"/><stop offset="0.75" stop-color="rgb(255,249,220)"/><stop offset="1.0" stop-color="rgb(255,210,179)"/></linearGradient>
<rect x="511" y="1038" width="328" height="2" fill="url(#cie25)"/>
<linearGradient id="cie26" gradientUnits="userSpaceOnUse" x1="511.3" y1="0" x2="838.7" y2="0"><stop offset="0.0" stop-color="rgb(143,250,217)"/><stop offset="0.25" stop-color="rgb(182,252,217)"/><stop offset="0.5" stop-color="rgb(230,255,225)"/><stop offset="0.75" stop-color="rgb(255,248,221)"/><stop offset="1.0" stop-color="rgb(255,209,179)"/></linearGradient>
<rect x="511" y="1040" width="328" height="2" fill="url(#cie26)"/>
<linearGradient id="cie27" gradientUnits="userSpaceOnUse" x1="511.3" y1="0" x2="838.7" y2="0"><stop offset="0.0" stop-color="rgb(143,250,218)"/><stop offset="0.25" stop-color="rgb(183,252,218)"/><stop offset="0.5" stop-color="rgb(231,255,226)"/><stop offset="0.75" stop-color="rgb(255,248,222)"/><stop offset="1.0" stop-color="rgb(255,209,179)"/></linearGradient>
<rect x="511" y="1042" width="328" height="2" fill="url(#cie27)"/>
<linearGradient id="cie28" gradientUnits="userSpaceOnUse" x1="511.3" y1="0" x2="838.7" y2="0"><stop offset="0.0" stop-color="rgb(144,250,219)"/><stop offset="0.25" stop-color="rgb(183,252,219)"/><stop offset="0.5" stop-color="rgb(231,255,227)"/><stop offset="0.75" stop-color="rgb(255,248,223)"/><stop offset="1.0" stop-color="rgb(255,209,180)"/></linearGradient>
<rect x="511" y="1044" width="328" height="2" fill="url(#cie28)"/>
<linearGradient id="cie29" gradientUnits="userSpaceOnUse" x1="511.3" y1="0" x2="838.7" y2="0"><stop offset="0.0" stop-color="rgb(144,250,220)"/><stop offset="0.25" stop-color="rgb(184,252,220)"/><stop offset="0.5" stop-color="rgb(232,255,228)"/><stop offset="0.75" stop-color="rgb(255,248,224)"/><stop offset="1.0" stop-color="rgb(255,208,180)"/></linearGradient>
<rect x="511" y="1046" width="328" height="2" fill="url(#cie29)"/>
<linearGradient id="cie30" gradientUnits="userSpaceOnUse" x1="511.3" y1="0" x2="838.7" y2="0"><stop offset="0.0" stop-color="rgb(144,250,221)"/><stop offset="0.25" stop-color="rgb(184,252,221)"/><stop offset="0.5" stop-color="rgb(232,255,229)"/><stop offset="0.75" stop-color="rgb(255,248,224)"/><stop offset="1.0" stop-color="rgb(255,207,180)"/></linearGradient>
<rect x="511" y="1048" width="328" height="2" fill="url(#cie30)"/>
<linearGradient id="cie31" gradientUnits="userSpaceOnUse" x1="511.3" y1="0" x2="838.7" y2="0"><stop offset="0.0" stop-color="rgb(145,250,222)"/><stop offset="0.25" stop-color="rgb(185,252,222)"/><stop offset="0.5" stop-color="rgb(233,255,230)"/><stop offset="0.75" stop-color="rgb(255,248,225)"/><stop offset="1.0" stop-color="rgb(255,207,180)"/></linearGradient>
<rect x="511" y="1050" width="328" height="2" fill="url(#cie31)"/>
<linearGradient id="cie32" gradientUnits="userSpaceOnUse" x1="511.3" y1="0" x2="838.7" y2="0"><stop offset="0.0" stop-color="rgb(145,250,223)"/><stop offset="0.25" stop-color="rgb(185,252,223)"/><stop offset="0.5" stop-color="rgb(233,255,230)"/><stop offset="0.75" stop-color="rgb(255,247,225)"/><stop offset="1.0" stop-color="rgb(255,206,179)"/></linearGradient>
<rect x="511" y="1052" width="328" height="2" fill="url(#cie32)"/>
<linearGradient id="cie33" gradientUnits="userSpaceOnUse" x1="511.3" y1="0" x2="838.7" y2="0"><stop offset="0.0" stop-color="rgb(146,250,224)"/><stop offset="0.25" stop-color="rgb(186,252,224)"/><stop offset="0.5" stop-color="rgb(234,255,231)"/><stop offset="0.75" stop-color="rgb(255,247,226)"/><stop offset="1.0" stop-color="rgb(255,205,179)"/></linearGradient>
<rect x="511" y="1054" width="328" height="2" fill="url(#cie33)"/>
<linearGradient id="cie34" gradientUnits="userSpaceOnUse" x1="511.3" y1="0" x2="838.7" y2="0"><stop offset="0.0" stop-color="rgb(146,250,226)"/><stop offset="0.25" stop-color="rgb(187,252,226)"/><stop offset="0.5" stop-color="rgb(234,255,232)"/><stop offset="0.75" stop-color="rgb(255,247,226)"/><stop offset="1.0" stop-color="rgb(255,205,179)"/></linearGradient>
<rect x="511" y="1056" width="328" height="2" fill="url(#cie34)"/>
<linearGradient id="cie35" gradientUnits="userSpaceOnUse" x1="511.3" y1="0" x2="838.7" y2="0"><stop offset="0.0" stop-color="rgb(146,250,227)"/><stop offset="0.25" stop-color="rgb(187,253,227)"/><stop offset="0.5" stop-color="rgb(234,255,233)"/><stop offset="0.75" stop-color="rgb(255,246,226)"/><stop offset="1.0" stop-color="rgb(255,204,178)"/></linearGradient>
<rect x="511" y="1058" width="328" height="2" fill="url(#cie35)"/>
<linearGradient id="cie36" gradientUnits="userSpaceOnUse" x1="511.3" y1="0" x2="838.7" y2="0"><stop offset="0.0" stop-color="rgb(147,250,228)"/><stop offset="0.25" stop-color="rgb(188,253,228)"/><stop offset="0.5" stop-color="rgb(235,255,234)"/><stop offset="0.75" stop-color="rgb(255,246,227)"/><stop offset="1.0" stop-color="rgb(255,203,178)"/></linearGradient>
<rect x="511" y="1060" width="328" height="2" fill="url(#cie36)"/>
<linearGradient id="cie37" gradientUnits="userSpaceOnUse" x1="511.3" y1="0" x2="838.7" y2="0"><stop offset="0.0" stop-color="rgb(147,251,229)"/><stop offset="0.25" stop-color="rgb(188,253,229)"/><stop offset="0.5" stop-color="rgb(235,255,235)"/><stop offset="0.75" stop-color="rgb(255,246,227)"/><stop offset="1.0" stop-color="rgb(255,203,178)"/></linearGradient>
<rect x="511" y="1062" width="328" height="2" fill="url(#cie37)"/>
<linearGradient id="cie38" gradientUnits="userSpaceOnUse" x1="511.3" y1="0" x2="838.7" y2="0"><stop offset="0.0" stop-color="rgb(148,251,230)"/><stop offset="0.25" stop-color="rgb(189,253,230)"/><stop offset="0.5" stop-color="rgb(236,255,236)"/><stop offset="0.75" stop-color="rgb(255,246,228)"/><stop offset="1.0" stop-color="rgb(255,202,178)"/></linearGradient>
<rect x="511" y="1064" width="328" height="2" fill="url(#cie38)"/>
<linearGradient id="cie39" gradientUnits="userSpaceOnUse" x1="511.3" y1="0" x2="838.7" y2="0"><stop offset="0.0" stop-color="rgb(148,251,231)"/><stop offset="0.25" stop-color="rgb(189,253,231)"/><stop offset="0.5" stop-color="rgb(236,255,237)"/><stop offset="0.75" stop-color="rgb(255,245,228)"/><stop offset="1.0" stop-color="rgb(255,201,177)"/></linearGradient>
<rect x="511" y="1066" width="328" height="2" fill="url(#cie39)"/>
<linearGradient id="cie40" gradientUnits="userSpaceOnUse" x1="511.3" y1="0" x2="838.7" y2="0"><stop offset="0.0" stop-color="rgb(148,251,233)"/><stop offset="0.25" stop-color="rgb(190,253,233)"/><stop offset="0.5" stop-color="rgb(236,255,238)"/><stop offset="0.75" stop-color="rgb(255,245,228)"/><stop offset="1.0" stop-color="rgb(255,201,177)"/></linearGradient>
<rect x="511" y="1068" width="328" height="2" fill="url(#cie40)"/>
<linearGradient id="cie41" gradientUnits="userSpaceOnUse" x1="511.3" y1="0" x2="838.7" y2="0"><stop offset="0.0" stop-color="rgb(149,251,234)"/><stop offset="0.25" stop-color="rgb(190,253,234)"/><stop offset="0.5" stop-color="rgb(237,255,239)"/><stop offset="0.75" stop-color="rgb(255,245,229)"/><stop offset="1.0" stop-color="rgb(255,200,177)"/></linearGradient>
<rect x="511" y="1070" width="328" height="2" fill="url(#cie41)"/>
<linearGradient id="cie42" gradientUnits="userSpaceOnUse" x1="511.3" y1="0" x2="838.7" y2="0"><stop offset="0.0" stop-color="rgb(149,251,235)"/><stop offset="0.25" stop-color="rgb(191,253,235)"/><stop offset="0.5" stop-color="rgb(237,255,240)"/><stop offset="0.75" stop-color="rgb(255,245,229)"/><stop offset="1.0" stop-color="rgb(255,199,177)"/></linearGradient>
<rect x="511" y="1072" width="328" height="2" fill="url(#cie42)"/>
<linearGradient id="cie43" gradientUnits="userSpaceOnUse" x1="511.3" y1="0" x2="838.7" y2="0"><stop offset="0.0" stop-color="rgb(150,251,236)"/><stop offset="0.25" stop-color="rgb(191,253,236)"/><stop offset="0.5" stop-color="rgb(238,255,240)"/><stop offset="0.75" stop-color="rgb(255,244,230)"/><stop offset="1.0" stop-color="rgb(255,199,176)"/></linearGradient>
<rect x="511" y="1074" width="328" height="2" fill="url(#cie43)"/>
<linearGradient id="cie44" gradientUnits="userSpaceOnUse" x1="511.3" y1="0" x2="838.7" y2="0"><stop offset="0.0" stop-color="rgb(150,251,237)"/><stop offset="0.25" stop-color="rgb(192,253,237)"/><stop offset="0.5" stop-color="rgb(238,255,241)"/><stop offset="0.75" stop-color="rgb(255,244,230)"/><stop offset="1.0" stop-color="rgb(255,198,176)"/></linearGradient>
<rect x="511" y="1076" width="328" height="2" fill="url(#cie44)"/>
<linearGradient id="cie45" gradientUnits="userSpaceOnUse" x1="511.3" y1="0" x2="838.7" y2="0"><stop offset="0.0" stop-color="rgb(150,251,239)"/><stop offset="0.25" stop-color="rgb(192,254,239)"/><stop offset="0.5" stop-color="rgb(238,255,242)"/><stop offset="0.75" stop-color="rgb(255,244,230)"/><stop offset="1.0" stop-color="rgb(255,197,176)"/></linearGradient>
<rect x="511" y="1078" width="328" height="2" fill="url(#cie45)"/>
<linearGradient id="cie46" gradientUnits="userSpaceOnUse" x1="511.3" y1="0" x2="838.7" y2="0"><stop offset="0.0" stop-color="rgb(151,251,240)"/><stop offset="0.25" stop-color="rgb(193,254,240)"/><stop offset="0.5" stop-color="rgb(239,255,243)"/><stop offset="0.75" stop-color="rgb(255,243,231)"/><stop offset="1.0" stop-color="rgb(255,197,175)"/></linearGradient>
<rect x="511" y="1080" width="328" height="2" fill="url(#cie46)"/>
<linearGradient id="cie47" gradientUnits="userSpaceOnUse" x1="511.3" y1="0" x2="838.7" y2="0"><stop offset="0.0" stop-color="rgb(151,251,241)"/><stop offset="0.25" stop-color="rgb(194,254,241)"/><stop offset="0.5" stop-color="rgb(239,255,244)"/><stop offset="0.75" stop-color="rgb(255,243,231)"/><stop offset="1.0" stop-color="rgb(255,196,175)"/></linearGradient>
<rect x="511" y="1082" width="328" height="2" fill="url(#cie47)"/>
<linearGradient id="cie48" gradientUnits="userSpaceOnUse" x1="511.3" y1="0" x2="838.7" y2="0"><stop offset="0.0" stop-color="rgb(152,251,242)"/><stop offset="0.25" stop-color="rgb(194,254,242)"/><stop offset="0.5" stop-color="rgb(240,255,245)"/><stop offset="0.75" stop-color="rgb(255,243,232)"/><stop offset="1.0" stop-color="rgb(255,195,175)"/></linearGradient>
<rect x="511" y="1084" width="328" height="2" fill="url(#cie48)"/>
<linearGradient id="cie49" gradientUnits="userSpaceOnUse" x1="511.3" y1="0" x2="838.7" y2="0"><stop offset="0.0" stop-color="rgb(152,251,243)"/><stop offset="0.25" stop-color="rgb(195,254,243)"/><stop offset="0.5" stop-color="rgb(240,255,246)"/><stop offset="0.75" stop-color="rgb(255,243,232)"/><stop offset="1.0" stop-color="rgb(255,195,175)"/></linearGradient>
<rect x="511" y="1086" width="328" height="2" fill="url(#cie49)"/>
<linearGradient id="cie50" gradientUnits="userSpaceOnUse" x1="511.3" y1="0" x2="838.7" y2="0"><stop offset="0.0" stop-color="rgb(152,251,244)"/><stop offset="0.25" stop-color="rgb(195,254,244)"/><stop offset="0.5" stop-color="rgb(240,255,247)"/><stop offset="0.75" stop-color="rgb(255,242,232)"/><stop offset="1.0" stop-color="rgb(255,194,174)"/></linearGradient>
<rect x="511" y="1088" width="328" height="2" fill="url(#cie50)"/>
<linearGradient id="cie51" gradientUnits="userSpaceOnUse" x1="511.3" y1="0" x2="838.7" y2="0"><stop offset="0.0" stop-color="rgb(153,251,246)"/><stop offset="0.25" stop-color="rgb(196,254,246)"/><stop offset="0.5" stop-color="rgb(241,255,248)"/><stop offset="0.75" stop-color="rgb(255,242,233)"/><stop offset="1.0" stop-color="rgb(255,193,174)"/></linearGradient>
<rect x="511" y="1090" width="328" height="2" fill="url(#cie51)"/>
<linearGradient id="cie52" gradientUnits="userSpaceOnUse" x1="511.3" y1="0" x2="838.7" y2="0"><stop offset="0.0" stop-color="rgb(153,252,247)"/><stop offset="0.25" stop-color="rgb(196,254,247)"/><stop offset="0.5" stop-color="rgb(241,255,249)"/><stop offset="0.75" stop-color="rgb(255,242,233)"/><stop offset="1.0" stop-color="rgb(255,193,174)"/></linearGradient>
<rect x="511" y="1092" width="328" height="2" fill="url(#cie52)"/>
<linearGradient id="cie53" gradientUnits="userSpaceOnUse" x1="511.3" y1="0" x2="838.7" y2="0"><stop offset="0.0" stop-color="rgb(154,252,248)"/><stop offset="0.25" stop-color="rgb(197,254,248)"/><stop offset="0.5" stop-color="rgb(242,255,250)"/><stop offset="0.75" stop-color="rgb(255,242,234)"/><stop offset="1.0" stop-color="rgb(255,192,174)"/></linearGradient>
<rect x="511" y="1094" width="328" height="2" fill="url(#cie53)"/>
<linearGradient id="cie54" gradientUnits="userSpaceOnUse" x1="511.3" y1="0" x2="838.7" y2="0"><stop offset="0.0" stop-color="rgb(154,252,249)"/><stop offset="0.25" stop-color="rgb(197,254,249)"/><stop offset="0.5" stop-color="rgb(242,255,250)"/><stop offset="0.75" stop-color="rgb(255,241,234)"/><stop offset="1.0" stop-color="rgb(255,191,173)"/></linearGradient>
<rect x="511" y="1096" width="328" height="2" fill="url(#cie54)"/>
<linearGradient id="cie55" gradientUnits="userSpaceOnUse" x1="511.3" y1="0" x2="838.7" y2="0"><stop offset="0.0" stop-color="rgb(154,252,250)"/><stop offset="0.25" stop-color="rgb(198,255,250)"/><stop offset="0.5" stop-color="rgb(242,255,251)"/><stop offset="0.75" stop-color="rgb(255,241,234)"/><stop offset="1.0" stop-color="rgb(255,191,173)"/></linearGradient>
<rect x="511" y="1098" width="328" height="2" fill="url(#cie55)"/>
<linearGradient id="cie56" gradientUnits="userSpaceOnUse" x1="511.3" y1="0" x2="838.7" y2="0"><stop offset="0.0" stop-color="rgb(155,252,251)"/><stop offset="0.25" stop-color="rgb(198,255,251)"/><stop offset="0.5" stop-color="rgb(243,255,252)"/><stop offset="0.75" stop-color="rgb(255,241,235)"/><stop offset="1.0" stop-color="rgb(255,190,173)"/></linearGradient>
<rect x="511" y="1100" width="328" height="2" fill="url(#cie56)"/>
<linearGradient id="cie57" gradientUnits="userSpaceOnUse" x1="511.3" y1="0" x2="838.7" y2="0"><stop offset="0.0" stop-color="rgb(155,252,253)"/><stop offset="0.25" stop-color="rgb(199,255,253)"/><stop offset="0.5" stop-color="rgb(243,255,253)"/><stop offset="0.75" stop-color="rgb(255,241,235)"/><stop offset="1.0" stop-color="rgb(255,189,173)"/></linearGradient>
<rect x="511" y="1102" width="328" height="2" fill="url(#cie57)"/>
<linearGradient id="cie58" gradientUnits="userSpaceOnUse" x1="511.3" y1="0" x2="838.7" y2="0"><stop offset="0.0" stop-color="rgb(156,252,254)"/><stop offset="0.25" stop-color="rgb(199,255,254)"/><stop offset="0.5" stop-color="rgb(244,255,254)"/><stop offset="0.75" stop-color="rgb(255,240,236)"/><stop offset="1.0" stop-color="rgb(255,189,172)"/></linearGradient>
<rect x="511" y="1104" width="328" height="2" fill="url(#cie58)"/>
<linearGradient id="cie59" gradientUnits="userSpaceOnUse" x1="511.3" y1="0" x2="838.7" y2="0"><stop offset="0.0" stop-color="rgb(156,252,255)"/><stop offset="0.25" stop-color="rgb(200,255,255)"/><stop offset="0.5" stop-color="rgb(244,255,255)"/><stop offset="0.75" stop-color="rgb(255,240,236)"/><stop offset="1.0" stop-color="rgb(255,188,172)"/></linearGradient>
<rect x="511" y="1106" width="328" height="2" fill="url(#cie59)"/>
<linearGradient id="cie60" gradientUnits="userSpaceOnUse" x1="511.3" y1="0" x2="838.7" y2="0"><stop offset="0.0" stop-color="rgb(156,251,255)"/><stop offset="0.25" stop-color="rgb(201,254,255)"/><stop offset="0.5" stop-color="rgb(244,254,255)"/><stop offset="0.75" stop-color="rgb(255,239,236)"/><stop offset="1.0" stop-color="rgb(255,187,173)"/></linearGradient>
<rect x="511" y="1108" width="328" height="2" fill="url(#cie60)"/>
<linearGradient id="cie61" gradientUnits="userSpaceOnUse" x1="511.3" y1="0" x2="838.7" y2="0"><stop offset="0.0" stop-color="rgb(157,250,255)"/><stop offset="0.25" stop-color="rgb(201,253,255)"/><stop offset="0.5" stop-color="rgb(245,254,255)"/><stop offset="0.75" stop-color="rgb(255,238,236)"/><stop offset="1.0" stop-color="rgb(255,187,173)"/></linearGradient>
<rect x="511" y="1110" width="328" height="2" fill="url(#cie61)"/>
<linearGradient id="cie62" gradientUnits="userSpaceOnUse" x1="511.3" y1="0" x2="838.7" y2="0"><stop offset="0.0" stop-color="rgb(157,249,255)"/><stop offset="0.25" stop-color="rgb(202,252,255)"/><stop offset="0.5" stop-color="rgb(245,253,255)"/><stop offset="0.75" stop-color="rgb(255,238,236)"/><stop offset="1.0" stop-color="rgb(255,186,174)"/></linearGradient>
<rect x="511" y="1112" width="328" height="2" fill="url(#cie62)"/>
<linearGradient id="cie63" gradientUnits="userSpaceOnUse" x1="511.3" y1="0" x2="838.7" y2="0"><stop offset="0.0" stop-color="rgb(158,248,255)"/><stop offset="0.25" stop-color="rgb(202,251,255)"/><stop offset="0.5" stop-color="rgb(245,253,255)"/><stop offset="0.75" stop-color="rgb(255,237,235)"/><stop offset="1.0" stop-color="rgb(255,185,175)"/></linearGradient>
<rect x="511" y="1114" width="328" height="2" fill="url(#cie63)"/>
<linearGradient id="cie64" gradientUnits="userSpaceOnUse" x1="511.3" y1="0" x2="838.7" y2="0"><stop offset="0.0" stop-color="rgb(158,247,255)"/><stop offset="0.25" stop-color="rgb(203,250,255)"/><stop offset="0.5" stop-color="rgb(246,252,255)"/><stop offset="0.75" stop-color="rgb(255,236,235)"/><stop offset="1.0" stop-color="rgb(255,185,175)"/></linearGradient>
<rect x="511" y="1116" width="328" height="2" fill="url(#cie64)"/>
<linearGradient id="cie65" gradientUnits="userSpaceOnUse" x1="511.3" y1="0" x2="838.7" y2="0"><stop offset="0.0" stop-color="rgb(158,246,255)"/><stop offset="0.25" stop-color="rgb(203,250,255)"/><stop offset="0.5" stop-color="rgb(246,252,255)"/><stop offset="0.75" stop-color="rgb(255,235,235)"/><stop offset="1.0" stop-color="rgb(255,184,176)"/></linearGradient>
<rect x="511" y="1118" width="328" height="2" fill="url(#cie65)"/>
<linearGradient id="cie66" gradientUnits="userSpaceOnUse" x1="511.3" y1="0" x2="838.7" y2="0"><stop offset="0.0" stop-color="rgb(159,244,255)"/><stop offset="0.25" stop-color="rgb(204,249,255)"/><stop offset="0.5" stop-color="rgb(247,251,255)"/><stop offset="0.75" stop-color="rgb(255,234,235)"/><stop offset="1.0" stop-color="rgb(255,183,177)"/></linearGradient>
<rect x="511" y="1120" width="328" height="2" fill="url(#cie66)"/>
<linearGradient id="cie67" gradientUnits="userSpaceOnUse" x1="511.3" y1="0" x2="838.7" y2="0"><stop offset="0.0" stop-color="rgb(159,243,255)"/><stop offset="0.25" stop-color="rgb(204,248,255)"/><stop offset="0.5" stop-color="rgb(247,251,255)"/><stop offset="0.75" stop-color="rgb(255,234,235)"/><stop offset="1.0" stop-color="rgb(255,183,177)"/></linearGradient>
<rect x="511" y="1122" width="328" height="2" fill="url(#cie67)"/>
<linearGradient id="cie68" gradientUnits="userSpaceOnUse" x1="511.3" y1="0" x2="838.7" y2="0"><stop offset="0.0" stop-color="rgb(160,242,255)"/><stop offset="0.25" stop-color="rgb(205,247,255)"/><stop offset="0.5" stop-color="rgb(247,250,255)"/><stop offset="0.75" stop-color="rgb(255,233,235)"/><stop offset="1.0" stop-color="rgb(255,182,178)"/></linearGradient>
<rect x="511" y="1124" width="328" height="2" fill="url(#cie68)"/>
<linearGradient id="cie69" gradientUnits="userSpaceOnUse" x1="511.3" y1="0" x2="838.7" y2="0"><stop offset="0.0" stop-color="rgb(160,241,255)"/><stop offset="0.25" stop-color="rgb(205,246,255)"/><stop offset="0.5" stop-color="rgb(248,250,255)"/><stop offset="0.75" stop-color="rgb(255,232,235)"/><stop offset="1.0" stop-color="rgb(255,181,179)"/></linearGradient>
<rect x="511" y="1126" width="328" height="2" fill="url(#cie69)"/>
<linearGradient id="cie70" gradientUnits="userSpaceOnUse" x1="511.3" y1="0" x2="838.7" y2="0"><stop offset="0.0" stop-color="rgb(160,240,255)"/><stop offset="0.25" stop-color="rgb(206,245,255)"/><stop offset="0.5" stop-color="rgb(248,249,255)"/><stop offset="0.75" stop-color="rgb(255,231,235)"/><stop offset="1.0" stop-color="rgb(255,181,179)"/></linearGradient>
<rect x="511" y="1128" width="328" height="2" fill="url(#cie70)"/>
<linearGradient id="cie71" gradientUnits="userSpaceOnUse" x1="511.3" y1="0" x2="838.7" y2="0"><stop offset="0.0" stop-color="rgb(161,239,255)"/><stop offset="0.25" stop-color="rgb(206,244,255)"/><stop offset="0.5" stop-color="rgb(248,249,255)"/><stop offset="0.75" stop-color="rgb(255,230,234)"/><stop offset="1.0" stop-color="rgb(255,180,180)"/></linearGradient>
<rect x="511" y="1130" width="328" height="2" fill="url(#cie71)"/>
<linearGradient id="cie72" gradientUnits="userSpaceOnUse" x1="511.3" y1="0" x2="838.7" y2="0"><stop offset="0.0" stop-color="rgb(161,238,255)"/><stop offset="0.25" stop-color="rgb(207,243,255)"/><stop offset="0.5" stop-color="rgb(249,248,255)"/><stop offset="0.75" stop-color="rgb(255,230,234)"/><stop offset="1.0" stop-color="rgb(255,179,181)"/></linearGradient>
<rect x="511" y="1132" width="328" height="2" fill="url(#cie72)"/>
<linearGradient id="cie73" gradientUnits="userSpaceOnUse" x1="511.3" y1="0" x2="838.7" y2="0"><stop offset="0.0" stop-color="rgb(162,237,255)"/><stop offset="0.25" stop-color="rgb(208,242,255)"/><stop offset="0.5" stop-color="rgb(249,248,255)"/><stop offset="0.75" stop-color="rgb(255,229,234)"/><stop offset="1.0" stop-color="rgb(255,179,181)"/></linearGradient>
<rect x="511" y="1134" width="328" height="2" fill="url(#cie73)"/>
<linearGradient id="cie74" gradientUnits="userSpaceOnUse" x1="511.3" y1="0" x2="838.7" y2="0"><stop offset="0.0" stop-color="rgb(162,236,255)"/><stop offset="0.25" stop-color="rgb(208,241,255)"/><stop offset="0.5" stop-color="rgb(250,247,255)"/><stop offset="0.75" stop-color="rgb(255,228,234)"/><stop offset="1.0" stop-color="rgb(255,178,182)"/></linearGradient>
<rect x="511" y="1136" width="328" height="2" fill="url(#cie74)"/>
<linearGradient id="cie75" gradientUnits="userSpaceOnUse" x1="511.3" y1="0" x2="838.7" y2="0"><stop offset="0.0" stop-color="rgb(162,235,255)"/><stop offset="0.25" stop-color="rgb(209,240,255)"/><stop offset="0.5" stop-color="rgb(250,247,255)"/><stop offset="0.75" stop-color="rgb(255,227,234)"/><stop offset="1.0" stop-color="rgb(255,177,183)"/></linearGradient>
<rect x="511" y="1138" width="328" height="2" fill="url(#cie75)"/>
<linearGradient id="cie76" gradientUnits="userSpaceOnUse" x1="511.3" y1="0" x2="838.7" y2="0"><stop offset="0.0" stop-color="rgb(163,234,255)"/><stop offset="0.25" stop-color="rgb(209,240,255)"/><stop offset="0.5" stop-color="rgb(250,246,255)"/><stop offset="0.75" stop-color="rgb(255,226,234)"/><stop offset="1.0" stop-color="rgb(255,177,183)"/></linearGradient>
<rect x="511" y="1140" width="328" height="2" fill="url(#cie76)"/>
<linearGradient id="cie77" gradientUnits="userSpaceOnUse" x1="511.3" y1="0" x2="838.7" y2="0"><stop offset="0.0" stop-color="rgb(163,233,255)"/><stop offset="0.25" stop-color="rgb(210,239,255)"/><stop offset="0.5" stop-color="rgb(251,246,255)"/><stop offset="0.75" stop-color="rgb(255,225,234)"/><stop offset="1.0" stop-color="rgb(255,176,184)"/></linearGradient>
<rect x="511" y="1142" width="328" height="2" fill="url(#cie77)"/>
<linearGradient id="cie78" gradientUnits="userSpaceOnUse" x1="511.3" y1="0" x2="838.7" y2="0"><stop offset="0.0" stop-color="rgb(164,232,255)"/><stop offset="0.25" stop-color="rgb(210,238,255)"/><stop offset="0.5" stop-color="rgb(251,245,255)"/><stop offset="0.75" stop-color="rgb(255,225,233)"/><stop offset="1.0" stop-color="rgb(255,175,185)"/></linearGradient>
<rect x="511" y="1144" width="328" height="2" fill="url(#cie78)"/>
<linearGradient id="cie79" gradientUnits="userSpaceOnUse" x1="511.3" y1="0" x2="838.7" y2="0"><stop offset="0.0" stop-color="rgb(164,230,255)"/><stop offset="0.25" stop-color="rgb(211,237,255)"/><stop offset="0.5" stop-color="rgb(251,245,255)"/><stop offset="0.75" stop-color="rgb(255,224,233)"/><stop offset="1.0" stop-color="rgb(255,175,185)"/></linearGradient>
<rect x="511" y="1146" width="328" height="2" fill="url(#cie79)"/>
<linearGradient id="cie80" gradientUnits="userSpaceOnUse" x1="511.3" y1="0" x2="838.7" y2="0"><stop offset="0.0" stop-color="rgb(164,229,255)"/><stop offset="0.25" stop-color="rgb(211,236,255)"/><stop offset="0.5" stop-color="rgb(252,244,255)"/><stop offset="0.75" stop-color="rgb(255,223,233)"/><stop offset="1.0" stop-color="rgb(255,174,186)"/></linearGradient>
<rect x="511" y="1148" width="328" height="2" fill="url(#cie80)"/>
<linearGradient id="cie81" gradientUnits="userSpaceOnUse" x1="511.3" y1="0" x2="838.7" y2="0"><stop offset="0.0" stop-color="rgb(165,228,255)"/><stop offset="0.25" stop-color="rgb(212,235,255)"/><stop offset="0.5" stop-color="rgb(252,244,255)"/><stop offset="0.75" stop-color="rgb(255,222,233)"/><stop offset="1.0" stop-color="rgb(255,173,187)"/></linearGradient>
<rect x="511" y="1150" width="328" height="2" fill="url(#cie81)"/>
<linearGradient id="cie82" gradientUnits="userSpaceOnUse" x1="511.3" y1="0" x2="838.7" y2="0"><stop offset="0.0" stop-color="rgb(165,227,255)"/><stop offset="0.25" stop-color="rgb(212,234,255)"/><stop offset="0.5" stop-color="rgb(253,243,255)"/><stop offset="0.75" stop-color="rgb(255,221,233)"/><stop offset="1.0" stop-color="rgb(255,173,187)"/></linearGradient>
<rect x="511" y="1152" width="328" height="2" fill="url(#cie82)"/>
<linearGradient id="cie83" gradientUnits="userSpaceOnUse" x1="511.3" y1="0" x2="838.7" y2="0"><stop offset="0.0" stop-color="rgb(166,226,255)"/><stop offset="0.25" stop-color="rgb(213,233,255)"/><stop offset="0.5" stop-color="rgb(253,243,255)"/><stop offset="0.75" stop-color="rgb(255,221,233)"/><stop offset="1.0" stop-color="rgb(255,172,188)"/></linearGradient>
<rect x="511" y="1154" width="328" height="2" fill="url(#cie83)"/>
<linearGradient id="cie84" gradientUnits="userSpaceOnUse" x1="511.3" y1="0" x2="838.7" y2="0"><stop offset="0.0" stop-color="rgb(166,225,255)"/><stop offset="0.25" stop-color="rgb(213,232,255)"/><stop offset="0.5" stop-color="rgb(253,242,255)"/><stop offset="0.75" stop-color="rgb(255,220,233)"/><stop offset="1.0" stop-color="rgb(255,171,189)"/></linearGradient>
<rect x="511" y="1156" width="328" height="2" fill="url(#cie84)"/>
<linearGradient id="cie85" gradientUnits="userSpaceOnUse" x1="511.3" y1="0" x2="838.7" y2="0"><stop offset="0.0" stop-color="rgb(166,224,255)"/><stop offset="0.25" stop-color="rgb(214,231,255)"/><stop offset="0.5" stop-color="rgb(254,242,255)"/><stop offset="0.75" stop-color="rgb(255,219,233)"/><stop offset="1.0" stop-color="rgb(255,171,189)"/></linearGradient>
<rect x="511" y="1158" width="328" height="2" fill="url(#cie85)"/>
<linearGradient id="cie86" gradientUnits="userSpaceOnUse" x1="511.3" y1="0" x2="838.7" y2="0"><stop offset="0.0" stop-color="rgb(167,223,255)"/><stop offset="0.25" stop-color="rgb(215,230,255)"/><stop offset="0.5" stop-color="rgb(254,241,255)"/><stop offset="0.75" stop-color="rgb(255,218,232)"/><stop offset="1.0" stop-color="rgb(255,170,190)"/></linearGradient>
<rect x="511" y="1160" width="328" height="2" fill="url(#cie86)"/>
<linearGradient id="cie87" gradientUnits="userSpaceOnUse" x1="511.3" y1="0" x2="838.7" y2="0"><stop offset="0.0" stop-color="rgb(167,222,255)"/><stop offset="0.25" stop-color="rgb(215,230,255)"/><stop offset="0.5" stop-color="rgb(254,241,255)"/><stop offset="0.75" stop-color="rgb(255,217,232)"/><stop offset="1.0" stop-color="rgb(255,169,191)"/></linearGradient>
<rect x="511" y="1162" width="328" height="2" fill="url(#cie87)"/>
<linearGradient id="cie88" gradientUnits="userSpaceOnUse" x1="511.3" y1="0" x2="838.7" y2="0"><stop offset="0.0" stop-color="rgb(168,221,255)"/><stop offset="0.25" stop-color="rgb(216,229,255)"/><stop offset="0.5" stop-color="rgb(255,240,255)"/><stop offset="0.75" stop-color="rgb(255,217,232)"/><stop offset="1.0" stop-color="rgb(255,169,191)"/></linearGradient>
<rect x="511" y="1164" width="328" height="2" fill="url(#cie88)"/>
<linearGradient id="cie89" gradientUnits="userSpaceOnUse" x1="511.3" y1="0" x2="838.7" y2="0"><stop offset="0.0" stop-color="rgb(168,220,255)"/><stop offset="0.25" stop-color="rgb(216,228,255)"/><stop offset="0.5" stop-color="rgb(255,240,255)"/><stop offset="0.75" stop-color="rgb(255,216,232)"/><stop offset="1.0" stop-color="rgb(255,168,192)"/></linearGradient>
<rect x="511" y="1166" width="328" height="2" fill="url(#cie89)"/>
<linearGradient id="cie90" gradientUnits="userSpaceOnUse" x1="511.3" y1="0" x2="838.7" y2="0"><stop offset="0.0" stop-color="rgb(168,219,255)"/><stop offset="0.25" stop-color="rgb(216,227,255)"/><stop offset="0.5" stop-color="rgb(255,238,255)"/><stop offset="0.75" stop-color="rgb(255,214,231)"/><stop offset="1.0" stop-color="rgb(255,167,192)"/></linearGradient>
<rect x="511" y="1168" width="328" height="2" fill="url(#cie90)"/>
<linearGradient id="cie91" gradientUnits="userSpaceOnUse" x1="511.3" y1="0" x2="838.7" y2="0"><stop offset="0.0" stop-color="rgb(168,218,255)"/><stop offset="0.25" stop-color="rgb(216,226,255)"/><stop offset="0.5" stop-color="rgb(255,237,255)"/><stop offset="0.75" stop-color="rgb(255,213,230)"/><stop offset="1.0" stop-color="rgb(255,166,192)"/></linearGradient>
<rect x="511" y="1170" width="328" height="2" fill="url(#cie91)"/>
<linearGradient id="cie92" gradientUnits="userSpaceOnUse" x1="511.3" y1="0" x2="838.7" y2="0"><stop offset="0.0" stop-color="rgb(168,217,255)"/><stop offset="0.25" stop-color="rgb(216,225,255)"/><stop offset="0.5" stop-color="rgb(255,235,255)"/><stop offset="0.75" stop-color="rgb(255,211,230)"/><stop offset="1.0" stop-color="rgb(255,165,192)"/></linearGradient>
<rect x="511" y="1172" width="328" height="2" fill="url(#cie92)"/>
<linearGradient id="cie93" gradientUnits="userSpaceOnUse" x1="511.3" y1="0" x2="838.7" y2="0"><stop offset="0.0" stop-color="rgb(168,216,255)"/><stop offset="0.25" stop-color="rgb(215,223,255)"/><stop offset="0.5" stop-color="rgb(255,234,255)"/><stop offset="0.75" stop-color="rgb(255,210,229)"/><stop offset="1.0" stop-color="rgb(255,163,191)"/></linearGradient>
<rect x="511" y="1174" width="328" height="2" fill="url(#cie93)"/>
<linearGradient id="cie94" gradientUnits="userSpaceOnUse" x1="511.3" y1="0" x2="838.7" y2="0"><stop offset="0.0" stop-color="rgb(168,215,255)"/><stop offset="0.25" stop-color="rgb(215,222,255)"/><stop offset="0.5" stop-color="rgb(255,232,254)"/><stop offset="0.75" stop-color="rgb(255,208,228)"/><stop offset="1.0" stop-color="rgb(255,162,191)"/></linearGradient>
<rect x="511" y="1176" width="328" height="2" fill="url(#cie94)"/>
<linearGradient id="cie95" gradientUnits="userSpaceOnUse" x1="511.3" y1="0" x2="838.7" y2="0"><stop offset="0.0" stop-color="rgb(168,214,255)"/><stop offset="0.25" stop-color="rgb(215,221,255)"/><stop offset="0.5" stop-color="rgb(255,231,254)"/><stop offset="0.75" stop-color="rgb(255,207,228)"/><stop offset="1.0" stop-color="rgb(255,161,191)"/></linearGradient>
<rect x="511" y="1178" width="328" height="2" fill="url(#cie95)"/>
<linearGradient id="cie96" gradientUnits="userSpaceOnUse" x1="511.3" y1="0" x2="838.7" y2="0"><stop offset="0.0" stop-color="rgb(168,213,255)"/><stop offset="0.25" stop-color="rgb(215,220,255)"/><stop offset="0.5" stop-color="rgb(255,229,254)"/><stop offset="0.75" stop-color="rgb(255,205,227)"/><stop offset="1.0" stop-color="rgb(255,160,191)"/></linearGradient>
<rect x="511" y="1180" width="328" height="2" fill="url(#cie96)"/>
<linearGradient id="cie97" gradientUnits="userSpaceOnUse" x1="511.3" y1="0" x2="838.7" y2="0"><stop offset="0.0" stop-color="rgb(168,212,255)"/><stop offset="0.25" stop-color="rgb(215,219,255)"/><stop offset="0.5" stop-color="rgb(255,228,254)"/><stop offset="0.75" stop-color="rgb(255,204,226)"/><stop offset="1.0" stop-color="rgb(255,159,191)"/></linearGradient>
<rect x="511" y="1182" width="328" height="2" fill="url(#cie97)"/>
<linearGradient id="cie98" gradientUnits="userSpaceOnUse" x1="511.3" y1="0" x2="838.7" y2="0"><stop offset="0.0" stop-color="rgb(168,211,255)"/><stop offset="0.25" stop-color="rgb(215,218,255)"/><stop offset="0.5" stop-color="rgb(255,226,254)"/><stop offset="0.75" stop-color="rgb(255,202,226)"/><stop offset="1.0" stop-color="rgb(255,158,191)"/></linearGradient>
<rect x="511" y="1184" width="328" height="2" fill="url(#cie98)"/>
<linearGradient id="cie99" gradientUnits="userSpaceOnUse" x1="511.3" y1="0" x2="838.7" y2="0"><stop offset="0.0" stop-color="rgb(168,210,255)"/><stop offset="0.25" stop-color="rgb(215,217,255)"/><stop offset="0.5" stop-color="rgb(255,225,254)"/><stop offset="0.75" stop-color="rgb(255,201,225)"/><stop offset="1.0" stop-color="rgb(255,157,191)"/></linearGradient>
<rect x="511" y="1186" width="328" height="2" fill="url(#cie99)"/>
<linearGradient id="cie100" gradientUnits="userSpaceOnUse" x1="511.3" y1="0" x2="838.7" y2="0"><stop offset="0.0" stop-color="rgb(168,209,255)"/><stop offset="0.25" stop-color="rgb(214,216,255)"/><stop offset="0.5" stop-color="rgb(255,223,254)"/><stop offset="0.75" stop-color="rgb(255,199,224)"/><stop offset="1.0" stop-color="rgb(255,156,190)"/></linearGradient>
<rect x="511" y="1188" width="328" height="2" fill="url(#cie100)"/>
<linearGradient id="cie101" gradientUnits="userSpaceOnUse" x1="511.3" y1="0" x2="838.7" y2="0"><stop offset="0.0" stop-color="rgb(168,208,255)"/><stop offset="0.25" stop-color="rgb(214,215,255)"/><stop offset="0.5" stop-color="rgb(255,222,254)"/><stop offset="0.75" stop-color="rgb(255,198,224)"/><stop offset="1.0" stop-color="rgb(255,155,190)"/></linearGradient>
<rect x="511" y="1190" width="328" height="2" fill="url(#cie101)"/>
<linearGradient id="cie102" gradientUnits="userSpaceOnUse" x1="511.3" y1="0" x2="838.7" y2="0"><stop offset="0.0" stop-color="rgb(168,208,255)"/><stop offset="0.25" stop-color="rgb(214,214,255)"/><stop offset="0.5" stop-color="rgb(255,220,254)"/><stop offset="0.75" stop-color="rgb(255,196,223)"/><stop offset="1.0" stop-color="rgb(255,154,190)"/></linearGradient>
<rect x="511" y="1192" width="328" height="2" fill="url(#cie102)"/>
<linearGradient id="cie103" gradientUnits="userSpaceOnUse" x1="511.3" y1="0" x2="838.7" y2="0"><stop offset="0.0" stop-color="rgb(168,207,255)"/><stop offset="0.25" stop-color="rgb(214,213,255)"/><stop offset="0.5" stop-color="rgb(255,219,254)"/><stop offset="0.75" stop-color="rgb(255,195,222)"/><stop offset="1.0" stop-color="rgb(255,153,190)"/></linearGradient>
<rect x="511" y="1194" width="328" height="2" fill="url(#cie103)"/>
<linearGradient id="cie104" gradientUnits="userSpaceOnUse" x1="511.3" y1="0" x2="838.7" y2="0"><stop offset="0.0" stop-color="rgb(168,206,255)"/><stop offset="0.25" stop-color="rgb(214,212,255)"/><stop offset="0.5" stop-color="rgb(255,217,253)"/><stop offset="0.75" stop-color="rgb(255,193,222)"/><stop offset="1.0" stop-color="rgb(255,152,190)"/></linearGradient>
<rect x="511" y="1196" width="328" height="2" fill="url(#cie104)"/>
<linearGradient id="cie105" gradientUnits="userSpaceOnUse" x1="511.3" y1="0" x2="838.7" y2="0"><stop offset="0.0" stop-color="rgb(168,205,255)"/><stop offset="0.25" stop-color="rgb(214,211,255)"/><stop offset="0.5" stop-color="rgb(255,216,253)"/><stop offset="0.75" stop-color="rgb(255,192,221)"/><stop offset="1.0" stop-color="rgb(255,151,190)"/></linearGradient>
<rect x="511" y="1198" width="328" height="2" fill="url(#cie105)"/>
<linearGradient id="cie106" gradientUnits="userSpaceOnUse" x1="511.3" y1="0" x2="838.7" y2="0"><stop offset="0.0" stop-color="rgb(168,204,255)"/><stop offset="0.25" stop-color="rgb(214,209,255)"/><stop offset="0.5" stop-color="rgb(255,214,253)"/><stop offset="0.75" stop-color="rgb(255,190,220)"/><stop offset="1.0" stop-color="rgb(255,149,190)"/></linearGradient>
<rect x="511" y="1200" width="328" height="2" fill="url(#cie106)"/>
<linearGradient id="cie107" gradientUnits="userSpaceOnUse" x1="511.3" y1="0" x2="838.7" y2="0"><stop offset="0.0" stop-color="rgb(168,203,255)"/><stop offset="0.25" stop-color="rgb(214,208,255)"/><stop offset="0.5" stop-color="rgb(255,213,253)"/><stop offset="0.75" stop-color="rgb(255,189,220)"/><stop offset="1.0" stop-color="rgb(255,148,190)"/></linearGradient>
<rect x="511" y="1202" width="328" height="2" fill="url(#cie107)"/>
<linearGradient id="cie108" gradientUnits="userSpaceOnUse" x1="511.3" y1="0" x2="838.7" y2="0"><stop offset="0.0" stop-color="rgb(168,202,255)"/><stop offset="0.25" stop-color="rgb(213,207,255)"/><stop offset="0.5" stop-color="rgb(255,212,253)"/><stop offset="0.75" stop-color="rgb(255,188,219)"/><stop offset="1.0" stop-color="rgb(255,147,189)"/></linearGradient>
<rect x="511" y="1204" width="328" height="2" fill="url(#cie108)"/>
<linearGradient id="cie109" gradientUnits="userSpaceOnUse" x1="511.3" y1="0" x2="838.7" y2="0"><stop offset="0.0" stop-color="rgb(168,201,255)"/><stop offset="0.25" stop-color="rgb(213,206,255)"/><stop offset="0.5" stop-color="rgb(255,210,253)"/><stop offset="0.75" stop-color="rgb(255,186,218)"/><stop offset="1.0" stop-color="rgb(255,146,189)"/></linearGradient>
<rect x="511" y="1206" width="328" height="2" fill="url(#cie109)"/>
<linearGradient id="cie110" gradientUnits="userSpaceOnUse" x1="511.3" y1="0" x2="838.7" y2="0"><stop offset="0.0" stop-color="rgb(168,200,255)"/><stop offset="0.25" stop-color="rgb(213,205,255)"/><stop offset="0.5" stop-color="rgb(255,209,253)"/><stop offset="0.75" stop-color="rgb(255,185,218)"/><stop offset="1.0" stop-color="rgb(255,145,189)"/></linearGradient>
<rect x="511" y="1208" width="328" height="2" fill="url(#cie110)"/>
<linearGradient id="cie111" gradientUnits="userSpaceOnUse" x1="511.3" y1="0" x2="838.7" y2="0"><stop offset="0.0" stop-color="rgb(168,199,255)"/><stop offset="0.25" stop-color="rgb(213,204,255)"/><stop offset="0.5" stop-color="rgb(255,207,253)"/><stop offset="0.75" stop-color="rgb(255,183,217)"/><stop offset="1.0" stop-color="rgb(255,144,189)"/></linearGradient>
<rect x="511" y="1210" width="328" height="2" fill="url(#cie111)"/>
<linearGradient id="cie112" gradientUnits="userSpaceOnUse" x1="511.3" y1="0" x2="838.7" y2="0"><stop offset="0.0" stop-color="rgb(168,198,255)"/><stop offset="0.25" stop-color="rgb(213,203,255)"/><stop offset="0.5" stop-color="rgb(255,206,253)"/><stop offset="0.75" stop-color="rgb(255,182,216)"/><stop offset="1.0" stop-color="rgb(255,143,189)"/></linearGradient>
<rect x="511" y="1212" width="328" height="2" fill="url(#cie112)"/>
<linearGradient id="cie113" gradientUnits="userSpaceOnUse" x1="511.3" y1="0" x2="838.7" y2="0"><stop offset="0.0" stop-color="rgb(168,197,255)"/><stop offset="0.25" stop-color="rgb(213,202,255)"/><stop offset="0.5" stop-color="rgb(255,204,253)"/><stop offset="0.75" stop-color="rgb(255,180,216)"/><stop offset="1.0" stop-color="rgb(255,142,189)"/></linearGradient>
<rect x="511" y="1214" width="328" height="2" fill="url(#cie113)"/>
<linearGradient id="cie114" gradientUnits="userSpaceOnUse" x1="511.3" y1="0" x2="838.7" y2="0"><stop offset="0.0" stop-color="rgb(168,196,255)"/><stop offset="0.25" stop-color="rgb(213,201,255)"/><stop offset="0.5" stop-color="rgb(255,203,252)"/><stop offset="0.75" stop-color="rgb(255,179,215)"/><stop offset="1.0" stop-color="rgb(255,141,189)"/></linearGradient>
<rect x="511" y="1216" width="328" height="2" fill="url(#cie114)"/>
<linearGradient id="cie115" gradientUnits="userSpaceOnUse" x1="511.3" y1="0" x2="838.7" y2="0"><stop offset="0.0" stop-color="rgb(168,195,255)"/><stop offset="0.25" stop-color="rgb(212,200,255)"/><stop offset="0.5" stop-color="rgb(255,201,252)"/><stop offset="0.75" stop-color="rgb(255,177,214)"/><stop offset="1.0" stop-color="rgb(255,140,188)"/></linearGradient>
<rect x="511" y="1218" width="328" height="2" fill="url(#cie115)"/>
<linearGradient id="cie116" gradientUnits="userSpaceOnUse" x1="511.3" y1="0" x2="838.7" y2="0"><stop offset="0.0" stop-color="rgb(168,194,255)"/><stop offset="0.25" stop-color="rgb(212,199,255)"/><stop offset="0.5" stop-color="rgb(255,200,252)"/><stop offset="0.75" stop-color="rgb(255,176,214)"/><stop offset="1.0" stop-color="rgb(255,139,188)"/></linearGradient>
<rect x="511" y="1220" width="328" height="2" fill="url(#cie116)"/>
<linearGradient id="cie117" gradientUnits="userSpaceOnUse" x1="511.3" y1="0" x2="838.7" y2="0"><stop offset="0.0" stop-color="rgb(168,193,255)"/><stop offset="0.25" stop-color="rgb(212,198,255)"/><stop offset="0.5" stop-color="rgb(255,198,252)"/><stop offset="0.75" stop-color="rgb(255,174,213)"/><stop offset="1.0" stop-color="rgb(255,138,188)"/></linearGradient>
<rect x="511" y="1222" width="328" height="2" fill="url(#cie117)"/>
<linearGradient id="cie118" gradientUnits="userSpaceOnUse" x1="511.3" y1="0" x2="838.7" y2="0"><stop offset="0.0" stop-color="rgb(168,192,255)"/><stop offset="0.25" stop-color="rgb(212,197,255)"/><stop offset="0.5" stop-color="rgb(255,197,252)"/><stop offset="0.75" stop-color="rgb(255,173,212)"/><stop offset="1.0" stop-color="rgb(255,137,188)"/></linearGradient>
<rect x="511" y="1224" width="328" height="2" fill="url(#cie118)"/>
</g>
<path d="M553.1 1224.1 Q700 1110 837.1 1027.2" fill="none" stroke="#000" stroke-width="4"/>
<rect x="511.3" y="987.6" width="327.40000000000003" height="237.60000000000002" fill="none" stroke="#9a9a9a" stroke-width="2"/>
<line x1="503.4" y1="1006.9" x2="511.3" y2="1006.9" stroke="#d0d0d0" stroke-width="1.5"/>
<text x="502.2" y="1013.4" font-size="18.5" fill="#dedede" text-anchor="end" font-weight="normal" textLength="39" lengthAdjust="spacingAndGlyphs" >0,35</text>
<line x1="503.4" y1="1056" x2="511.3" y2="1056" stroke="#d0d0d0" stroke-width="1.5"/>
<text x="502.2" y="1062.5" font-size="18.5" fill="#dedede" text-anchor="end" font-weight="normal" textLength="39" lengthAdjust="spacingAndGlyphs" >0,34</text>
<line x1="503.4" y1="1102.6" x2="511.3" y2="1102.6" stroke="#d0d0d0" stroke-width="1.5"/>
<text x="502.2" y="1109.1" font-size="18.5" fill="#dedede" text-anchor="end" font-weight="normal" textLength="39" lengthAdjust="spacingAndGlyphs" >0,33</text>
<line x1="503.4" y1="1148.7" x2="511.3" y2="1148.7" stroke="#d0d0d0" stroke-width="1.5"/>
<text x="502.2" y="1155.2" font-size="18.5" fill="#dedede" text-anchor="end" font-weight="normal" textLength="39" lengthAdjust="spacingAndGlyphs" >0,32</text>
<line x1="503.4" y1="1195.8" x2="511.3" y2="1195.8" stroke="#d0d0d0" stroke-width="1.5"/>
<text x="502.2" y="1202.3" font-size="18.5" fill="#dedede" text-anchor="end" font-weight="normal" textLength="39" lengthAdjust="spacingAndGlyphs" >0,31</text>
<line x1="524.9" y1="1225.2" x2="524.9" y2="1233.2" stroke="#d0d0d0" stroke-width="1.5"/>
<text x="524.9" y="1253.5" font-size="18.5" fill="#dedede" text-anchor="middle" font-weight="normal" textLength="40" lengthAdjust="spacingAndGlyphs" >0,29</text>
<line x1="590" y1="1225.2" x2="590" y2="1233.2" stroke="#d0d0d0" stroke-width="1.5"/>
<text x="590" y="1253.5" font-size="18.5" fill="#dedede" text-anchor="middle" font-weight="normal" textLength="29" lengthAdjust="spacingAndGlyphs" >0,3</text>
<line x1="655.4" y1="1225.2" x2="655.4" y2="1233.2" stroke="#d0d0d0" stroke-width="1.5"/>
<text x="655.4" y="1253.5" font-size="18.5" fill="#dedede" text-anchor="middle" font-weight="normal" textLength="40" lengthAdjust="spacingAndGlyphs" >0,31</text>
<line x1="721" y1="1225.2" x2="721" y2="1233.2" stroke="#d0d0d0" stroke-width="1.5"/>
<text x="721" y="1253.5" font-size="18.5" fill="#dedede" text-anchor="middle" font-weight="normal" textLength="40" lengthAdjust="spacingAndGlyphs" >0,32</text>
<line x1="786.2" y1="1225.2" x2="786.2" y2="1233.2" stroke="#d0d0d0" stroke-width="1.5"/>
<text x="786.2" y="1253.5" font-size="18.5" fill="#dedede" text-anchor="middle" font-weight="normal" textLength="40" lengthAdjust="spacingAndGlyphs" >0,33</text>
<rect x="665" y="1097.3" width="18" height="18" fill="#fff" stroke="#000" stroke-width="1.9"/>
<circle cx="674" cy="1106.3" r="6" fill="#1a1a1a"/>
<circle cx="693.5" cy="1078" r="6" fill="#9a9a9a" stroke="#1e1e1e" stroke-width="1.3"/>
<circle cx="690" cy="1080.6" r="6" fill="#8a8a8a" stroke="#1e1e1e" stroke-width="1.3"/>
<circle cx="689" cy="1083.6" r="6" fill="#7a7a7a" stroke="#1e1e1e" stroke-width="1.3"/>
<circle cx="683.6" cy="1082.5" r="6" fill="#6e6e6e" stroke="#1e1e1e" stroke-width="1.3"/>
<circle cx="692" cy="1083" r="6" fill="#848484" stroke="#1e1e1e" stroke-width="1.3"/>
<circle cx="686" cy="1078.1" r="6" fill="#ffffff" stroke="#1e1e1e" stroke-width="1.3"/>
<rect x="862" y="957" width="1318.5" height="38.5" fill="url(#hdrg)"/>
<rect x="862" y="995.50" width="1318.5" height="35.75" fill="#404040"/>
<text x="880.2" y="1021.8" font-size="21" fill="#f2f2f2" text-anchor="start" font-weight="bold" textLength="82" lengthAdjust="spacingAndGlyphs" >x: CIE31</text>
<text x="1077.8" y="1021.8" font-size="21" fill="#f2f2f2" text-anchor="start" font-weight="normal" >0,000</text>
<text x="1178.55" y="1021.8" font-size="21" fill="#f2f2f2" text-anchor="start" font-weight="normal" >0,313</text>
<text x="1279.3" y="1021.8" font-size="21" fill="#f2f2f2" text-anchor="start" font-weight="normal" >0,316</text>
<text x="1380.05" y="1021.8" font-size="21" fill="#f2f2f2" text-anchor="start" font-weight="normal" >0,316</text>
<text x="1480.8" y="1021.8" font-size="21" fill="#f2f2f2" text-anchor="start" font-weight="normal" >0,315</text>
<text x="1581.55" y="1021.8" font-size="21" fill="#f2f2f2" text-anchor="start" font-weight="normal" >0,314</text>
<text x="1682.3" y="1021.8" font-size="21" fill="#f2f2f2" text-anchor="start" font-weight="normal" >0,316</text>
<text x="1783.05" y="1021.8" font-size="21" fill="#f2f2f2" text-anchor="start" font-weight="normal" >0,315</text>
<text x="1883.8" y="1021.8" font-size="21" fill="#f2f2f2" text-anchor="start" font-weight="normal" >0,315</text>
<text x="1984.55" y="1021.8" font-size="21" fill="#f2f2f2" text-anchor="start" font-weight="normal" >0,315</text>
<text x="2085.3" y="1021.8" font-size="21" fill="#f2f2f2" text-anchor="start" font-weight="normal" >0,314</text>
<rect x="862" y="1030.95" width="1318.5" height="35.75" fill="#808080"/>
<text x="880.2" y="1057.25" font-size="21" fill="#f2f2f2" text-anchor="start" font-weight="bold" textLength="83" lengthAdjust="spacingAndGlyphs" >y: CIE31</text>
<text x="1077.8" y="1057.25" font-size="21" fill="#f2f2f2" text-anchor="start" font-weight="normal" >0,000</text>
<text x="1178.55" y="1057.25" font-size="21" fill="#f2f2f2" text-anchor="start" font-weight="normal" >0,329</text>
<text x="1279.3" y="1057.25" font-size="21" fill="#f2f2f2" text-anchor="start" font-weight="normal" >0,335</text>
<text x="1380.05" y="1057.25" font-size="21" fill="#f2f2f2" text-anchor="start" font-weight="normal" >0,334</text>
<text x="1480.8" y="1057.25" font-size="21" fill="#f2f2f2" text-anchor="start" font-weight="normal" >0,334</text>
<text x="1581.55" y="1057.25" font-size="21" fill="#f2f2f2" text-anchor="start" font-weight="normal" >0,334</text>
<text x="1682.3" y="1057.25" font-size="21" fill="#f2f2f2" text-anchor="start" font-weight="normal" >0,335</text>
<text x="1783.05" y="1057.25" font-size="21" fill="#f2f2f2" text-anchor="start" font-weight="normal" >0,334</text>
<text x="1883.8" y="1057.25" font-size="21" fill="#f2f2f2" text-anchor="start" font-weight="normal" >0,334</text>
<text x="1984.55" y="1057.25" font-size="21" fill="#f2f2f2" text-anchor="start" font-weight="normal" >0,335</text>
<text x="2085.3" y="1057.25" font-size="21" fill="#f2f2f2" text-anchor="start" font-weight="normal" >0,335</text>
<rect x="862" y="1066.40" width="1318.5" height="35.75" fill="#404040"/>
<text x="880.2" y="1092.7" font-size="21" fill="#f2f2f2" text-anchor="start" font-weight="bold" textLength="15" lengthAdjust="spacingAndGlyphs" >Y</text>
<text x="1077.8" y="1092.7" font-size="21" fill="#f2f2f2" text-anchor="start" font-weight="normal" >0,000</text>
<text x="1178.55" y="1092.7" font-size="21" fill="#f2f2f2" text-anchor="start" font-weight="normal" >4,790</text>
<text x="1279.3" y="1092.7" font-size="21" fill="#f2f2f2" text-anchor="start" font-weight="normal" >21,630</text>
<text x="1380.05" y="1092.7" font-size="21" fill="#f2f2f2" text-anchor="start" font-weight="normal" >52,376</text>
<text x="1480.8" y="1092.7" font-size="21" fill="#f2f2f2" text-anchor="start" font-weight="normal" >99,514</text>
<text x="1581.55" y="1092.7" font-size="21" fill="#f2f2f2" text-anchor="start" font-weight="normal" >165,491</text>
<text x="1682.3" y="1092.7" font-size="21" fill="#f2f2f2" text-anchor="start" font-weight="normal" >247,905</text>
<text x="1783.05" y="1092.7" font-size="21" fill="#f2f2f2" text-anchor="start" font-weight="normal" >344,492</text>
<text x="1883.8" y="1092.7" font-size="21" fill="#f2f2f2" text-anchor="start" font-weight="normal" >473,031</text>
<text x="1984.55" y="1092.7" font-size="21" fill="#f2f2f2" text-anchor="start" font-weight="normal" >620,925</text>
<text x="2085.3" y="1092.7" font-size="21" fill="#f2f2f2" text-anchor="start" font-weight="normal" >790,083</text>
<rect x="862" y="1101.85" width="1318.5" height="35.75" fill="#808080"/>
<text x="880.2" y="1128.1499999999999" font-size="21" fill="#f2f2f2" text-anchor="start" font-weight="bold" textLength="86.5" lengthAdjust="spacingAndGlyphs" >Target Y</text>
<text x="1077.8" y="1128.1499999999999" font-size="21" fill="#f2f2f2" text-anchor="start" font-weight="normal" >0,000</text>
<text x="1178.55" y="1128.1499999999999" font-size="21" fill="#f2f2f2" text-anchor="start" font-weight="normal" >8,161</text>
<text x="1279.3" y="1128.1499999999999" font-size="21" fill="#f2f2f2" text-anchor="start" font-weight="normal" >26,156</text>
<text x="1380.05" y="1128.1499999999999" font-size="21" fill="#f2f2f2" text-anchor="start" font-weight="normal" >57,101</text>
<text x="1480.8" y="1128.1499999999999" font-size="21" fill="#f2f2f2" text-anchor="start" font-weight="normal" >104,977</text>
<text x="1581.55" y="1128.1499999999999" font-size="21" fill="#f2f2f2" text-anchor="start" font-weight="normal" >170,548</text>
<text x="1682.3" y="1128.1499999999999" font-size="21" fill="#f2f2f2" text-anchor="start" font-weight="normal" >251,678</text>
<text x="1783.05" y="1128.1499999999999" font-size="21" fill="#f2f2f2" text-anchor="start" font-weight="normal" >351,746</text>
<text x="1883.8" y="1128.1499999999999" font-size="21" fill="#f2f2f2" text-anchor="start" font-weight="normal" >477,074</text>
<text x="1984.55" y="1128.1499999999999" font-size="21" fill="#f2f2f2" text-anchor="start" font-weight="normal" >625,191</text>
<text x="2085.3" y="1128.1499999999999" font-size="21" fill="#f2f2f2" text-anchor="start" font-weight="normal" >790,083</text>
<rect x="862" y="1137.30" width="1318.5" height="35.75" fill="#404040"/>
<text x="880.2" y="1163.6" font-size="21" fill="#f2f2f2" text-anchor="start" font-weight="bold" textLength="175" lengthAdjust="spacingAndGlyphs" >Gamma Log/Log</text>
<text x="1077.8" y="1163.6" font-size="21" fill="#f2f2f2" text-anchor="start" font-weight="normal" >1,278</text>
<text x="1178.55" y="1163.6" font-size="21" fill="#f2f2f2" text-anchor="start" font-weight="normal" >2,236</text>
<text x="1279.3" y="1163.6" font-size="21" fill="#f2f2f2" text-anchor="start" font-weight="normal" >2,236</text>
<text x="1380.05" y="1163.6" font-size="21" fill="#f2f2f2" text-anchor="start" font-weight="normal" >2,242</text>
<text x="1480.8" y="1163.6" font-size="21" fill="#f2f2f2" text-anchor="start" font-weight="normal" >2,261</text>
<text x="1581.55" y="1163.6" font-size="21" fill="#f2f2f2" text-anchor="start" font-weight="normal" >2,268</text>
<text x="1682.3" y="1163.6" font-size="21" fill="#f2f2f2" text-anchor="start" font-weight="normal" >2,269</text>
<text x="1783.05" y="1163.6" font-size="21" fill="#f2f2f2" text-anchor="start" font-weight="normal" >2,309</text>
<text x="1883.8" y="1163.6" font-size="21" fill="#f2f2f2" text-anchor="start" font-weight="normal" >2,299</text>
<text x="1984.55" y="1163.6" font-size="21" fill="#f2f2f2" text-anchor="start" font-weight="normal" >2,335</text>
<text x="2085.3" y="1163.6" font-size="21" fill="#f2f2f2" text-anchor="start" font-weight="normal" >2,275</text>
<rect x="862" y="1172.75" width="1318.5" height="35.75" fill="#808080"/>
<text x="880.2" y="1199.05" font-size="21" fill="#f2f2f2" text-anchor="start" font-weight="bold" textLength="39.6" lengthAdjust="spacingAndGlyphs" >CCT</text>
<text x="1077.8" y="1199.05" font-size="21" fill="#f2f2f2" text-anchor="start" font-weight="normal" >2315,000</text>
<text x="1178.55" y="1199.05" font-size="21" fill="#f2f2f2" text-anchor="start" font-weight="normal" >6507,000</text>
<text x="1279.3" y="1199.05" font-size="21" fill="#f2f2f2" text-anchor="start" font-weight="normal" >6303,000</text>
<text x="1380.05" y="1199.05" font-size="21" fill="#f2f2f2" text-anchor="start" font-weight="normal" >6296,000</text>
<text x="1480.8" y="1199.05" font-size="21" fill="#f2f2f2" text-anchor="start" font-weight="normal" >6352,000</text>
<text x="1581.55" y="1199.05" font-size="21" fill="#f2f2f2" text-anchor="start" font-weight="normal" >6388,000</text>
<text x="1682.3" y="1199.05" font-size="21" fill="#f2f2f2" text-anchor="start" font-weight="normal" >6293,000</text>
<text x="1783.05" y="1199.05" font-size="21" fill="#f2f2f2" text-anchor="start" font-weight="normal" >6341,000</text>
<text x="1883.8" y="1199.05" font-size="21" fill="#f2f2f2" text-anchor="start" font-weight="normal" >6366,000</text>
<text x="1984.55" y="1199.05" font-size="21" fill="#f2f2f2" text-anchor="start" font-weight="normal" >6364,000</text>
<text x="2085.3" y="1199.05" font-size="21" fill="#f2f2f2" text-anchor="start" font-weight="normal" >6374,000</text>
<rect x="862" y="1208.20" width="1318.5" height="35.75" fill="#404040"/>
<text x="880.2" y="1234.5" font-size="21" fill="#f2f2f2" text-anchor="start" font-weight="bold" textLength="84.7" lengthAdjust="spacingAndGlyphs" >ΔE 2000</text>
<text x="1077.8" y="1234.5" font-size="21" fill="#f2f2f2" text-anchor="start" font-weight="normal" >0,012</text>
<text x="1178.55" y="1234.5" font-size="21" fill="#f2f2f2" text-anchor="start" font-weight="normal" >2,315</text>
<text x="1279.3" y="1234.5" font-size="21" fill="#f2f2f2" text-anchor="start" font-weight="normal" >1,939</text>
<text x="1380.05" y="1234.5" font-size="21" fill="#f2f2f2" text-anchor="start" font-weight="normal" >1,588</text>
<text x="1480.8" y="1234.5" font-size="21" fill="#f2f2f2" text-anchor="start" font-weight="normal" >1,631</text>
<text x="1581.55" y="1234.5" font-size="21" fill="#f2f2f2" text-anchor="start" font-weight="normal" >2,034</text>
<text x="1682.3" y="1234.5" font-size="21" fill="#f2f2f2" text-anchor="start" font-weight="normal" >2,123</text>
<text x="1783.05" y="1234.5" font-size="21" fill="#f2f2f2" text-anchor="start" font-weight="normal" >2,456</text>
<text x="1883.8" y="1234.5" font-size="21" fill="#f2f2f2" text-anchor="start" font-weight="normal" >2,847</text>
<text x="1984.55" y="1234.5" font-size="21" fill="#f2f2f2" text-anchor="start" font-weight="normal" >3,182</text>
<text x="2085.3" y="1234.5" font-size="21" fill="#f2f2f2" text-anchor="start" font-weight="normal" >3,580</text>
<text x="1122.3" y="985" font-size="19.5" fill="#f4f4f4" text-anchor="middle" font-weight="normal" stroke="#f4f4f4" stroke-width="0.55">0</text>
<text x="1223.05" y="985" font-size="19.5" fill="#f4f4f4" text-anchor="middle" font-weight="normal" stroke="#f4f4f4" stroke-width="0.55">10</text>
<text x="1323.8" y="985" font-size="19.5" fill="#f4f4f4" text-anchor="middle" font-weight="normal" stroke="#f4f4f4" stroke-width="0.55">20</text>
<text x="1424.55" y="985" font-size="19.5" fill="#f4f4f4" text-anchor="middle" font-weight="normal" stroke="#f4f4f4" stroke-width="0.55">30</text>
<text x="1525.3" y="985" font-size="19.5" fill="#f4f4f4" text-anchor="middle" font-weight="normal" stroke="#f4f4f4" stroke-width="0.55">40</text>
<text x="1626.05" y="985" font-size="19.5" fill="#f4f4f4" text-anchor="middle" font-weight="normal" stroke="#f4f4f4" stroke-width="0.55">50</text>
<text x="1726.8" y="985" font-size="19.5" fill="#f4f4f4" text-anchor="middle" font-weight="normal" stroke="#f4f4f4" stroke-width="0.55">60</text>
<text x="1827.55" y="985" font-size="19.5" fill="#f4f4f4" text-anchor="middle" font-weight="normal" stroke="#f4f4f4" stroke-width="0.55">70</text>
<text x="1928.3" y="985" font-size="19.5" fill="#f4f4f4" text-anchor="middle" font-weight="normal" stroke="#f4f4f4" stroke-width="0.55">80</text>
<text x="2029.05" y="985" font-size="19.5" fill="#f4f4f4" text-anchor="middle" font-weight="normal" stroke="#f4f4f4" stroke-width="0.55">90</text>
<text x="2129.8" y="985" font-size="19.5" fill="#f4f4f4" text-anchor="middle" font-weight="normal" stroke="#f4f4f4" stroke-width="0.55">100</text>
<path d="M862 1243.65 V957 H2180.5 V1243.65" fill="none" stroke="#121212" stroke-width="2"/>
<linearGradient id="darkbar" x1="0" y1="0" x2="0" y2="1"><stop offset="0" stop-color="#484848"/><stop offset="1" stop-color="#222"/></linearGradient>
<rect x="1671" y="1328.5" width="298" height="63.5" fill="url(#darkbar)"/>
<path d="M2 1390 V1332.5 Q2 1328.5 6 1328.5 H148 Q152 1328.5 152 1332.5 V1390 Z" fill="url(#btng)"/>
<rect x="7.2" y="1334" width="139.6" height="35.7" rx="3.5" fill="rgb(0,0,0)"/>
<text x="77" y="1384.5" font-size="10.5" fill="#2a2a2a" text-anchor="middle" font-weight="bold" >0</text>
<path d="M154 1390 V1332.5 Q154 1328.5 158 1328.5 H300 Q304 1328.5 304 1332.5 V1390 Z" fill="url(#btng)"/>
<rect x="159.2" y="1334" width="139.6" height="35.7" rx="3.5" fill="rgb(26,26,26)"/>
<text x="229" y="1384.5" font-size="10.5" fill="#2a2a2a" text-anchor="middle" font-weight="bold" >10</text>
<path d="M306 1390 V1332.5 Q306 1328.5 310 1328.5 H452 Q456 1328.5 456 1332.5 V1390 Z" fill="url(#btng)"/>
<rect x="311.2" y="1334" width="139.6" height="35.7" rx="3.5" fill="rgb(51,51,51)"/>
<text x="381" y="1384.5" font-size="10.5" fill="#2a2a2a" text-anchor="middle" font-weight="bold" >20</text>
<path d="M458 1390 V1332.5 Q458 1328.5 462 1328.5 H604 Q608 1328.5 608 1332.5 V1390 Z" fill="url(#btng)"/>
<rect x="463.2" y="1334" width="139.6" height="35.7" rx="3.5" fill="rgb(77,77,77)"/>
<text x="533" y="1384.5" font-size="10.5" fill="#2a2a2a" text-anchor="middle" font-weight="bold" >30</text>
<path d="M610 1390 V1332.5 Q610 1328.5 614 1328.5 H756 Q760 1328.5 760 1332.5 V1390 Z" fill="url(#btng)"/>
<rect x="615.2" y="1334" width="139.6" height="35.7" rx="3.5" fill="rgb(102,102,102)"/>
<text x="685" y="1384.5" font-size="10.5" fill="#2a2a2a" text-anchor="middle" font-weight="bold" >40</text>
<path d="M762 1390 V1332.5 Q762 1328.5 766 1328.5 H908 Q912 1328.5 912 1332.5 V1390 Z" fill="url(#btng)"/>
<rect x="767.2" y="1334" width="139.6" height="35.7" rx="3.5" fill="rgb(128,128,128)"/>
<text x="837" y="1384.5" font-size="10.5" fill="#2a2a2a" text-anchor="middle" font-weight="bold" >50</text>
<path d="M914 1390 V1332.5 Q914 1328.5 918 1328.5 H1060 Q1064 1328.5 1064 1332.5 V1390 Z" fill="url(#btng)"/>
<rect x="919.2" y="1334" width="139.6" height="35.7" rx="3.5" fill="rgb(153,153,153)"/>
<text x="989" y="1384.5" font-size="10.5" fill="#2a2a2a" text-anchor="middle" font-weight="bold" >60</text>
<path d="M1066 1390 V1332.5 Q1066 1328.5 1070 1328.5 H1212 Q1216 1328.5 1216 1332.5 V1390 Z" fill="url(#btng)"/>
<rect x="1071.2" y="1334" width="139.6" height="35.7" rx="3.5" fill="rgb(179,179,179)"/>
<text x="1141" y="1384.5" font-size="10.5" fill="#2a2a2a" text-anchor="middle" font-weight="bold" >70</text>
<path d="M1218 1390 V1332.5 Q1218 1328.5 1222 1328.5 H1364 Q1368 1328.5 1368 1332.5 V1390 Z" fill="url(#btng)"/>
<rect x="1223.2" y="1334" width="139.6" height="35.7" rx="3.5" fill="rgb(204,204,204)"/>
<text x="1293" y="1384.5" font-size="10.5" fill="#2a2a2a" text-anchor="middle" font-weight="bold" >80</text>
<path d="M1370 1390 V1332.5 Q1370 1328.5 1374 1328.5 H1516 Q1520 1328.5 1520 1332.5 V1390 Z" fill="url(#btng)"/>
<rect x="1375.2" y="1334" width="139.6" height="35.7" rx="3.5" fill="rgb(230,230,230)"/>
<text x="1445" y="1384.5" font-size="10.5" fill="#2a2a2a" text-anchor="middle" font-weight="bold" >90</text>
<path d="M1522 1392 V1332.5 Q1522 1328.5 1526 1328.5 H1668 Q1672 1328.5 1672 1332.5 V1392 Z" fill="#1d1d1d"/>
<rect x="1527.2" y="1334" width="139.6" height="35.7" rx="3.5" fill="rgb(255,255,255)"/>
<text x="1597" y="1384.5" font-size="10.5" fill="#ffffff" text-anchor="middle" font-weight="bold" >100</text>
<linearGradient id="ctlg" x1="0" y1="0" x2="0" y2="1"><stop offset="0" stop-color="#b0b0b0"/><stop offset="1" stop-color="#6a6a6a"/></linearGradient>
<radialGradient id="circg" cx="0.5" cy="0.25" r="0.75"><stop offset="0" stop-color="#7e7e7e"/><stop offset="1" stop-color="#b8b8b8"/></radialGradient>
<rect x="2244" y="1328.5" width="46" height="31.5" fill="#383838"/>
<circle cx="2267.1" cy="1344" r="10" fill="#2c2c2c"/>
<path d="M1969 1347 V1333 Q1969 1329 1973 1329 H2013 Q2017 1329 2017 1333 V1347 Z" fill="url(#ctlg)"/>
<rect x="1969" y="1348" width="48" height="42" fill="url(#ctlg)"/>
<circle cx="1993.4" cy="1338.2" r="7" fill="url(#circg)"/>
<path d="M1988.5 1341 H1998.3 L1993.4 1335.5 Z" fill="#2a2a2a"/>
<rect x="1978.6" y="1354.6" width="28.4" height="28.2" rx="4" fill="#b4b4b4" stroke="#222" stroke-width="2.5"/>
<rect x="1980" y="1369" width="25.6" height="12.5" fill="#999"/>
<rect x="1986" y="1362" width="13.7" height="13.5" fill="#000"/>
<rect x="2018" y="1329" width="45.5" height="30" fill="url(#ctlg)"/>
<circle cx="2041.2" cy="1344" r="10" fill="url(#circg)"/>
<rect x="2064.3" y="1329" width="44.6" height="30" fill="url(#ctlg)"/>
<circle cx="2087.0" cy="1344" r="10" fill="url(#circg)"/>
<rect x="2109.7" y="1329" width="44.3" height="30" fill="url(#ctlg)"/>
<circle cx="2132.2" cy="1344" r="10" fill="url(#circg)"/>
<rect x="2154.8" y="1329" width="44.3" height="30" fill="url(#ctlg)"/>
<circle cx="2177.4" cy="1344" r="10" fill="url(#circg)"/>
<rect x="2199.9" y="1329" width="43.3" height="30" fill="url(#ctlg)"/>
<circle cx="2221.9" cy="1344" r="10" fill="url(#circg)"/>
<rect x="2036.5" y="1339.5" width="8.5" height="8.5" fill="#222"/>
<path d="M2083.5 1338.5 L2092 1344 L2083.5 1349.5 Z" fill="#222"/>
<path d="M2127.5 1338.5 H2125.5 V1349.5 H2127.5 M2136.5 1338.5 H2138.5 V1349.5 H2136.5" fill="none" stroke="#222" stroke-width="1.6"/>
<circle cx="2130.5" cy="1344" r="1" fill="#222"/><circle cx="2133.5" cy="1344" r="1" fill="#222"/>
<path d="M2177 1344 C2174 1340 2170 1340 2170 1344 C2170 1348 2174 1348 2177 1344 C2180 1340 2184 1340 2184 1344 C2184 1348 2180 1348 2177 1344 Z" fill="none" stroke="#222" stroke-width="1.5"/>
<path d="M2216.5 1342.5 A5.5 5.5 0 0 1 2227 1341 M2227.5 1345.5 A5.5 5.5 0 0 1 2217 1347" fill="none" stroke="#222" stroke-width="2"/>
<path d="M2225 1337.5 L2228.5 1342 L2223.5 1342.5 Z M2219 1350.5 L2215.5 1346 L2220.5 1345.5 Z" fill="#222"/>
<path d="M2018 1390 V1364 Q2018 1360 2022 1360 H2154 V1390 Z" fill="url(#ctlg)"/>
<path d="M2155 1390 V1360 H2286 Q2290 1360 2290 1364 V1390 Z" fill="url(#ctlg)"/>
<circle cx="2048.9" cy="1374.9" r="10" fill="url(#circg)"/>
<circle cx="2262" cy="1374.9" r="10" fill="url(#circg)"/>
<path d="M2047.3 1370.6 L2043.3 1375 L2047.3 1379.4 M2051.8 1370.6 L2047.8 1375 L2051.8 1379.4" fill="none" stroke="#2a2a2a" stroke-width="1.5"/>
<path d="M2259.2 1370.6 L2263.2 1375 L2259.2 1379.4 M2263.7 1370.6 L2267.7 1375 L2263.7 1379.4" fill="none" stroke="#2a2a2a" stroke-width="1.5"/>
<text x="2076.2" y="1382.9" font-size="22" fill="#2e2e2e" text-anchor="start" font-weight="bold" textLength="49.6" lengthAdjust="spacingAndGlyphs" >Back</text>
<text x="2182.6" y="1382.9" font-size="22" fill="#2e2e2e" text-anchor="start" font-weight="bold" textLength="51" lengthAdjust="spacingAndGlyphs" >Next</text>
<linearGradient id="rshadow" x1="0" y1="0" x2="1" y2="0"><stop offset="0" stop-color="#000" stop-opacity="0"/><stop offset="1" stop-color="#000" stop-opacity="0.7"/></linearGradient>
<rect x="2286" y="96" width="6" height="1296" fill="url(#rshadow)"/>
<line x1="2292.5" y1="0" x2="2292.5" y2="1392" stroke="#8a8a8a" stroke-width="1"/>
<line x1="0" y1="1391.5" x2="2293" y2="1391.5" stroke="#777" stroke-width="1"/>
<line x1="0.5" y1="0" x2="0.5" y2="1392" stroke="#858585" stroke-width="1"/>
<line x1="1.5" y1="96" x2="1.5" y2="1392" stroke="#262626" stroke-width="1"/>
</svg></body></html>
